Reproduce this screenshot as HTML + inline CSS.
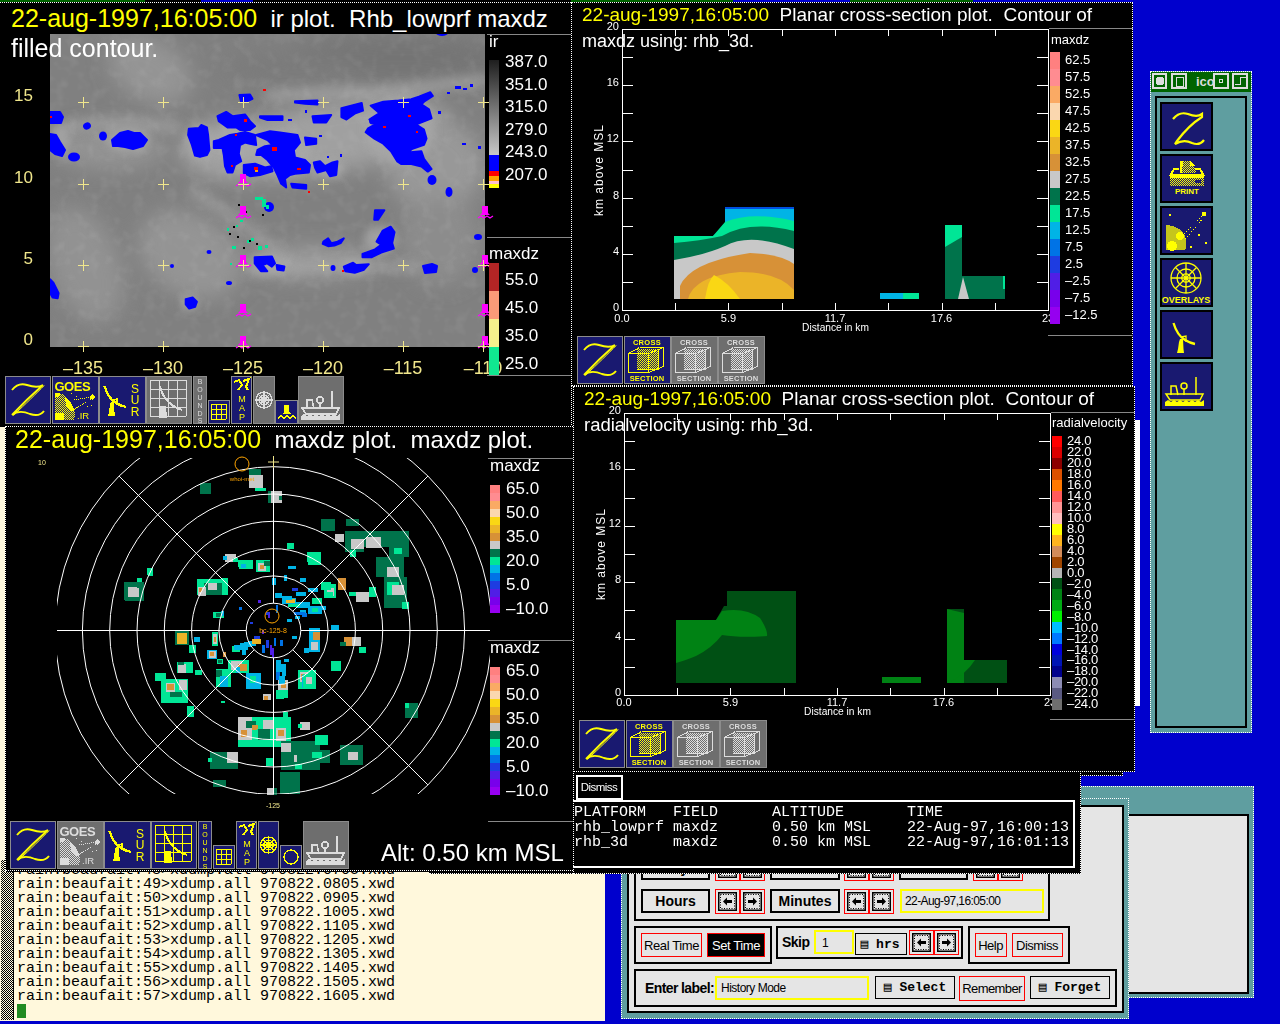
<!DOCTYPE html><html><head><meta charset="utf-8"><style>
html,body{margin:0;padding:0;width:1280px;height:1024px;overflow:hidden;background:#0000cd;position:relative;}
div{box-sizing:border-box;}
.t{position:absolute;white-space:pre;}
svg{position:absolute;overflow:visible;}
</style></head><body>

<div style="position:absolute;left:1150px;top:71px;width:102px;height:662px;background:#5f9ea0;border:1px dotted #fff;"></div>
<div style="position:absolute;left:1151px;top:72px;width:100px;height:20px;background:#006400;"></div>
<svg style="position:absolute;left:1151px;top:72px;" width="100" height="20" viewBox="0 0 100 20" shape-rendering="crispEdges"><rect x="2" y="2" width="13" height="14" fill="none" stroke="#ddd" stroke-width="1.3"/><circle cx="9" cy="9" r="4.5" fill="#ddd"/><rect x="21" y="2" width="14" height="14" fill="none" stroke="#ddd" stroke-width="1.3"/><rect x="25" y="5" width="7" height="9" fill="none" stroke="#ddd"/><text x="45" y="14" font-size="13" font-family="Liberation Sans" font-weight="bold" fill="#ddd">icon</text><rect x="63" y="2" width="14" height="14" fill="#006400" stroke="#ddd" stroke-width="1.3"/><circle cx="70" cy="9" r="2" fill="none" stroke="#ddd"/><rect x="82" y="2" width="14" height="14" fill="none" stroke="#ddd" stroke-width="1.3"/><path d="M84,12 L89,12 L89,5 L95,5" fill="none" stroke="#ddd"/></svg>
<div style="position:absolute;left:1155px;top:96px;width:92px;height:632px;border:2px solid #000;background:#5f9ea0;"></div>
<div style="position:absolute;left:1160px;top:102px;width:53px;height:49px;background:#191970;border:2px solid #000;"></div>
<div style="position:absolute;left:1160px;top:154px;width:53px;height:49px;background:#191970;border:2px solid #000;"></div>
<div style="position:absolute;left:1160px;top:206px;width:53px;height:49px;background:#191970;border:2px solid #000;"></div>
<div style="position:absolute;left:1160px;top:258px;width:53px;height:49px;background:#191970;border:2px solid #000;"></div>
<div style="position:absolute;left:1160px;top:310px;width:53px;height:49px;background:#191970;border:2px solid #000;"></div>
<div style="position:absolute;left:1160px;top:362px;width:53px;height:49px;background:#191970;border:2px solid #000;"></div>
<svg style="position:absolute;left:1160px;top:102px;shape-rendering:auto" width="53" height="49" viewBox="0 0 53 49" shape-rendering="crispEdges"><path d="M13,17 C17,12 21,10 28,12 C33,14 38,15 42,12 L42,15 C34,20 26,27 17,39 L15,42 C20,39 26,38 32,41 C37,43 41,42 44,38" fill="none" stroke="#ff0" stroke-width="2.2"/></svg>
<svg style="position:absolute;left:1160px;top:154px;" width="53" height="49" viewBox="0 0 53 49" shape-rendering="crispEdges"><defs><pattern id="pchk" width="2" height="2" patternUnits="userSpaceOnUse"><rect width="1" height="1" fill="#ff0"/><rect x="1" y="1" width="1" height="1" fill="#ff0"/></pattern></defs><path d="M20,7 L30,7 L34,12 L36,19 L20,19 Z" fill="url(#pchk)"/><path d="M30,7 L35,12 L30,12 Z" fill="#ff0"/><path d="M20,7 L23,7 L22,19 L20,19 Z" fill="#ff0"/><path d="M10,22 L14,15 L19,15 M35,15 L40,15 L44,22" fill="none" stroke="#ff0" stroke-width="2"/><rect x="10" y="20" width="34" height="4" fill="#ff0"/><rect x="10" y="24" width="34" height="8" fill="url(#pchk)"/><rect x="35" y="26" width="6" height="3" fill="#191970"/><text x="27" y="40" font-size="8" font-weight="bold" font-family="Liberation Sans" fill="#ff0" text-anchor="middle">PRINT</text></svg>
<svg style="position:absolute;left:1160px;top:206px;" width="53" height="49" viewBox="0 0 53 49" shape-rendering="crispEdges"><path d="M6,19 Q22,20 26,33 Q27,40 25,44 L6,44 Z" fill="#ff0" opacity="0.75"/><circle cx="12" cy="40" r="5" fill="#ff0"/><circle cx="20" cy="30" r="4" fill="#ff0"/><path d="M22,30 L44,8 M25,33 L45,10" stroke="#ff0" stroke-dasharray="1,2"/><rect x="42" y="6" width="4" height="4" fill="#ff0"/><rect x="9" y="8" width="2" height="2" fill="#ff0"/><rect x="38" y="28" width="2" height="2" fill="#ff0"/><rect x="45" y="36" width="2" height="2" fill="#ff0"/><rect x="30" y="40" width="2" height="2" fill="#ff0"/></svg>
<svg style="position:absolute;left:1160px;top:258px;shape-rendering:auto" width="53" height="49" viewBox="0 0 53 49" shape-rendering="crispEdges"><circle cx="26" cy="20" r="15" fill="none" stroke="#ff0" stroke-width="1.3"/><circle cx="26" cy="20" r="9.0" fill="none" stroke="#ff0" stroke-width="1.3"/><circle cx="26" cy="20" r="4.2" fill="none" stroke="#ff0" stroke-width="1.3"/><path d="M11,20 L41,20 M26,5 L26,35 M15.5,9.5 L36.5,30.5 M15.5,30.5 L36.5,9.5" stroke="#ff0" stroke-width="1.3"/><text x="26" y="45" font-size="9" font-weight="bold" font-family="Liberation Sans" fill="#ff0" text-anchor="middle">OVERLAYS</text></svg>
<svg style="position:absolute;left:1160px;top:310px;shape-rendering:auto" width="53" height="49" viewBox="0 0 53 49" shape-rendering="crispEdges"><g transform="translate(8,3)"><path d="M5.5,10 Q9,22 17,27 Q22,30 27,31" fill="none" stroke="#ff0" stroke-width="2.3"/><path d="M13,24 L18,23 L18,29" fill="none" stroke="#ff0" stroke-width="1.3"/><path d="M12,26 L15,26 L15.5,36 L16,40 L9,40 L10,36 L11,29 Z" fill="#ff0"/></g></svg>
<svg style="position:absolute;left:1160px;top:362px;shape-rendering:auto" width="53" height="49" viewBox="0 0 53 49" shape-rendering="crispEdges"><g transform="translate(2,0)"><g transform="scale(1.0)"><path d="M4,32 L41,32 L38,38 L8,38 Z" fill="none" stroke="#ff0" stroke-width="1.5"/><path d="M9,33 L9,24 L14,24 L16,33" fill="none" stroke="#ff0" stroke-width="1.5"/><circle cx="22" cy="24" r="3" fill="none" stroke="#ff0" stroke-width="1.5"/><path d="M22,27 L22,33 M34,15 L34,33" stroke="#ff0" stroke-width="1.5"/><path d="M3,40 L6,38 L9,40 L12,38 L15,40 L18,38 L21,40 L24,38 L27,40 L30,38 L33,40 L36,38 L39,40 L42,38 L42,44 L3,44 Z" fill="#ff0"/></g></g></svg>
<div style="position:absolute;left:1040px;top:786px;width:214px;height:212px;background:#5f9ea0;border:1px dotted #fff;"></div>
<div style="position:absolute;left:1125px;top:814px;width:124px;height:180px;background:#e5e5e5;border:2px solid #000;"></div>
<div style="position:absolute;left:1045px;top:771px;width:78px;height:5px;background:#000;border-bottom:1px dotted #fff;border-right:1px dotted #fff;"></div>
<div style="position:absolute;left:621px;top:798px;width:508px;height:221px;background:#5f9ea0;border:1px dotted #fff;"></div>
<div style="position:absolute;left:627px;top:805px;width:497px;height:208px;background:#e5e5e5;border:2px solid #000;"></div>
<div style="position:absolute;left:634px;top:812px;width:416px;height:109px;border:2px solid #000;"></div>
<div style="position:absolute;left:641px;top:856px;width:69px;height:24px;background:#e5e5e5;border:2px solid #000;"></div><div class="t" style="left:675.5px;transform:translateX(-50%);top:860.4px;font-size:14px;line-height:16.1px;color:#000;font-family:'Liberation Sans',sans-serif;font-weight:bold;">Day</div>
<div style="position:absolute;left:715px;top:856px;width:25px;height:25px;border:1px solid #f00;background:#e5e5e5;"></div><svg style="position:absolute;left:718px;top:859px;shape-rendering:auto" width="19" height="19" viewBox="0 0 19 19" shape-rendering="crispEdges"><rect x="0" y="0" width="19" height="19" fill="#000"/><rect x="1.5" y="1.5" width="16" height="16" fill="#e5e5e5"/><rect x="2.5" y="2.5" width="14" height="14" fill="none" stroke="#000" stroke-width="1" stroke-dasharray="1,1.5"/><path d="M5,9.5 L9,5.5 L9,8 L14,8 L14,11 L9,11 L9,13.5 Z" fill="#000"/></svg>
<div style="position:absolute;left:740px;top:856px;width:25px;height:25px;border:1px solid #f00;background:#e5e5e5;"></div><svg style="position:absolute;left:743px;top:859px;shape-rendering:auto" width="19" height="19" viewBox="0 0 19 19" shape-rendering="crispEdges"><rect x="0" y="0" width="19" height="19" fill="#000"/><rect x="1.5" y="1.5" width="16" height="16" fill="#e5e5e5"/><rect x="2.5" y="2.5" width="14" height="14" fill="none" stroke="#000" stroke-width="1" stroke-dasharray="1,1.5"/><path d="M14,9.5 L10,5.5 L10,8 L5,8 L5,11 L10,11 L10,13.5 Z" fill="#000"/></svg>
<div style="position:absolute;left:770px;top:856px;width:70px;height:24px;background:#e5e5e5;border:2px solid #000;"></div><div class="t" style="left:805.0px;transform:translateX(-50%);top:860.4px;font-size:14px;line-height:16.1px;color:#000;font-family:'Liberation Sans',sans-serif;font-weight:bold;">Month</div>
<div style="position:absolute;left:844px;top:856px;width:25px;height:25px;border:1px solid #f00;background:#e5e5e5;"></div><svg style="position:absolute;left:847px;top:859px;shape-rendering:auto" width="19" height="19" viewBox="0 0 19 19" shape-rendering="crispEdges"><rect x="0" y="0" width="19" height="19" fill="#000"/><rect x="1.5" y="1.5" width="16" height="16" fill="#e5e5e5"/><rect x="2.5" y="2.5" width="14" height="14" fill="none" stroke="#000" stroke-width="1" stroke-dasharray="1,1.5"/><path d="M5,9.5 L9,5.5 L9,8 L14,8 L14,11 L9,11 L9,13.5 Z" fill="#000"/></svg>
<div style="position:absolute;left:869px;top:856px;width:25px;height:25px;border:1px solid #f00;background:#e5e5e5;"></div><svg style="position:absolute;left:872px;top:859px;shape-rendering:auto" width="19" height="19" viewBox="0 0 19 19" shape-rendering="crispEdges"><rect x="0" y="0" width="19" height="19" fill="#000"/><rect x="1.5" y="1.5" width="16" height="16" fill="#e5e5e5"/><rect x="2.5" y="2.5" width="14" height="14" fill="none" stroke="#000" stroke-width="1" stroke-dasharray="1,1.5"/><path d="M14,9.5 L10,5.5 L10,8 L5,8 L5,11 L10,11 L10,13.5 Z" fill="#000"/></svg>
<div style="position:absolute;left:899px;top:856px;width:69px;height:24px;background:#e5e5e5;border:2px solid #000;"></div><div class="t" style="left:933.5px;transform:translateX(-50%);top:860.4px;font-size:14px;line-height:16.1px;color:#000;font-family:'Liberation Sans',sans-serif;font-weight:bold;">Year</div>
<div style="position:absolute;left:973px;top:856px;width:25px;height:25px;border:1px solid #f00;background:#e5e5e5;"></div><svg style="position:absolute;left:976px;top:859px;shape-rendering:auto" width="19" height="19" viewBox="0 0 19 19" shape-rendering="crispEdges"><rect x="0" y="0" width="19" height="19" fill="#000"/><rect x="1.5" y="1.5" width="16" height="16" fill="#e5e5e5"/><rect x="2.5" y="2.5" width="14" height="14" fill="none" stroke="#000" stroke-width="1" stroke-dasharray="1,1.5"/><path d="M5,9.5 L9,5.5 L9,8 L14,8 L14,11 L9,11 L9,13.5 Z" fill="#000"/></svg>
<div style="position:absolute;left:998px;top:856px;width:25px;height:25px;border:1px solid #f00;background:#e5e5e5;"></div><svg style="position:absolute;left:1001px;top:859px;shape-rendering:auto" width="19" height="19" viewBox="0 0 19 19" shape-rendering="crispEdges"><rect x="0" y="0" width="19" height="19" fill="#000"/><rect x="1.5" y="1.5" width="16" height="16" fill="#e5e5e5"/><rect x="2.5" y="2.5" width="14" height="14" fill="none" stroke="#000" stroke-width="1" stroke-dasharray="1,1.5"/><path d="M14,9.5 L10,5.5 L10,8 L5,8 L5,11 L10,11 L10,13.5 Z" fill="#000"/></svg>
<div style="position:absolute;left:641px;top:889px;width:69px;height:24px;background:#e5e5e5;border:2px solid #000;"></div><div class="t" style="left:675.5px;transform:translateX(-50%);top:893.4px;font-size:14px;line-height:16.1px;color:#000;font-family:'Liberation Sans',sans-serif;font-weight:bold;">Hours</div>
<div style="position:absolute;left:715px;top:889px;width:25px;height:25px;border:1px solid #f00;background:#e5e5e5;"></div><svg style="position:absolute;left:718px;top:892px;shape-rendering:auto" width="19" height="19" viewBox="0 0 19 19" shape-rendering="crispEdges"><rect x="0" y="0" width="19" height="19" fill="#000"/><rect x="1.5" y="1.5" width="16" height="16" fill="#e5e5e5"/><rect x="2.5" y="2.5" width="14" height="14" fill="none" stroke="#000" stroke-width="1" stroke-dasharray="1,1.5"/><path d="M5,9.5 L9,5.5 L9,8 L14,8 L14,11 L9,11 L9,13.5 Z" fill="#000"/></svg>
<div style="position:absolute;left:740px;top:889px;width:25px;height:25px;border:1px solid #f00;background:#e5e5e5;"></div><svg style="position:absolute;left:743px;top:892px;shape-rendering:auto" width="19" height="19" viewBox="0 0 19 19" shape-rendering="crispEdges"><rect x="0" y="0" width="19" height="19" fill="#000"/><rect x="1.5" y="1.5" width="16" height="16" fill="#e5e5e5"/><rect x="2.5" y="2.5" width="14" height="14" fill="none" stroke="#000" stroke-width="1" stroke-dasharray="1,1.5"/><path d="M14,9.5 L10,5.5 L10,8 L5,8 L5,11 L10,11 L10,13.5 Z" fill="#000"/></svg>
<div style="position:absolute;left:770px;top:889px;width:70px;height:24px;background:#e5e5e5;border:2px solid #000;"></div><div class="t" style="left:805.0px;transform:translateX(-50%);top:893.4px;font-size:14px;line-height:16.1px;color:#000;font-family:'Liberation Sans',sans-serif;font-weight:bold;">Minutes</div>
<div style="position:absolute;left:844px;top:889px;width:25px;height:25px;border:1px solid #f00;background:#e5e5e5;"></div><svg style="position:absolute;left:847px;top:892px;shape-rendering:auto" width="19" height="19" viewBox="0 0 19 19" shape-rendering="crispEdges"><rect x="0" y="0" width="19" height="19" fill="#000"/><rect x="1.5" y="1.5" width="16" height="16" fill="#e5e5e5"/><rect x="2.5" y="2.5" width="14" height="14" fill="none" stroke="#000" stroke-width="1" stroke-dasharray="1,1.5"/><path d="M5,9.5 L9,5.5 L9,8 L14,8 L14,11 L9,11 L9,13.5 Z" fill="#000"/></svg>
<div style="position:absolute;left:869px;top:889px;width:25px;height:25px;border:1px solid #f00;background:#e5e5e5;"></div><svg style="position:absolute;left:872px;top:892px;shape-rendering:auto" width="19" height="19" viewBox="0 0 19 19" shape-rendering="crispEdges"><rect x="0" y="0" width="19" height="19" fill="#000"/><rect x="1.5" y="1.5" width="16" height="16" fill="#e5e5e5"/><rect x="2.5" y="2.5" width="14" height="14" fill="none" stroke="#000" stroke-width="1" stroke-dasharray="1,1.5"/><path d="M14,9.5 L10,5.5 L10,8 L5,8 L5,11 L10,11 L10,13.5 Z" fill="#000"/></svg>
<div style="position:absolute;left:900px;top:889px;width:144px;height:24px;border:2px solid #ff0;"></div>
<div class="t" style="left:905px;top:895.1px;font-size:12px;line-height:13.8px;color:#000;font-family:'Liberation Sans',sans-serif;letter-spacing:-0.6px;">22-Aug-97,16:05:00</div>
<div style="position:absolute;left:634px;top:926px;width:138px;height:38px;border:2px solid #000;"></div>
<div style="position:absolute;left:641px;top:933px;width:61px;height:24px;border:1px solid #f00;"></div>
<div class="t" style="left:671.5px;transform:translateX(-50%);top:939.2px;font-size:13px;line-height:14.9px;color:#000;font-family:'Liberation Sans',sans-serif;letter-spacing:-0.4px;">Real Time</div>
<div style="position:absolute;left:707px;top:933px;width:58px;height:24px;border:1px solid #f00;background:#000;"></div>
<div class="t" style="left:736px;transform:translateX(-50%);top:939.2px;font-size:13px;line-height:14.9px;color:#fff;font-family:'Liberation Sans',sans-serif;letter-spacing:-0.4px;">Set Time</div>
<div style="position:absolute;left:776px;top:926px;width:187px;height:33px;border:2px solid #000;"></div>
<div class="t" style="left:782px;top:934.3px;font-size:14px;line-height:16.1px;color:#000;font-family:'Liberation Sans',sans-serif;font-weight:bold;letter-spacing:-0.5px;">Skip</div>
<div style="position:absolute;left:814px;top:930px;width:40px;height:24px;border:2px solid #ff0;"></div>
<div class="t" style="left:822px;top:937.1px;font-size:12px;line-height:13.8px;color:#000;font-family:'Liberation Sans',sans-serif;">1</div>
<div style="position:absolute;left:855px;top:933px;width:52px;height:22px;border:1px solid #000;"></div>
<div class="t" style="left:880px;transform:translateX(-50%);top:938.2px;font-size:13px;line-height:14.9px;color:#000;font-family:'Liberation Mono',monospace;font-weight:bold;">&#9636; hrs</div>
<div style="position:absolute;left:909px;top:930px;width:25px;height:25px;border:1px solid #f00;background:#e5e5e5;"></div><svg style="position:absolute;left:912px;top:933px;shape-rendering:auto" width="19" height="19" viewBox="0 0 19 19" shape-rendering="crispEdges"><rect x="0" y="0" width="19" height="19" fill="#000"/><rect x="1.5" y="1.5" width="16" height="16" fill="#e5e5e5"/><rect x="2.5" y="2.5" width="14" height="14" fill="none" stroke="#000" stroke-width="1" stroke-dasharray="1,1.5"/><path d="M5,9.5 L9,5.5 L9,8 L14,8 L14,11 L9,11 L9,13.5 Z" fill="#000"/></svg>
<div style="position:absolute;left:934px;top:930px;width:25px;height:25px;border:1px solid #f00;background:#e5e5e5;"></div><svg style="position:absolute;left:937px;top:933px;shape-rendering:auto" width="19" height="19" viewBox="0 0 19 19" shape-rendering="crispEdges"><rect x="0" y="0" width="19" height="19" fill="#000"/><rect x="1.5" y="1.5" width="16" height="16" fill="#e5e5e5"/><rect x="2.5" y="2.5" width="14" height="14" fill="none" stroke="#000" stroke-width="1" stroke-dasharray="1,1.5"/><path d="M14,9.5 L10,5.5 L10,8 L5,8 L5,11 L10,11 L10,13.5 Z" fill="#000"/></svg>
<div style="position:absolute;left:968px;top:926px;width:102px;height:38px;border:2px solid #000;"></div>
<div style="position:absolute;left:975px;top:933px;width:32px;height:24px;border:1px solid #f00;"></div>
<div class="t" style="left:990.5px;transform:translateX(-50%);top:939.2px;font-size:13px;line-height:14.9px;color:#000;font-family:'Liberation Sans',sans-serif;letter-spacing:-0.5px;">Help</div>
<div style="position:absolute;left:1012px;top:933px;width:51px;height:24px;border:1px solid #f00;"></div>
<div class="t" style="left:1037px;transform:translateX(-50%);top:939.2px;font-size:13px;line-height:14.9px;color:#000;font-family:'Liberation Sans',sans-serif;letter-spacing:-0.5px;">Dismiss</div>
<div style="position:absolute;left:634px;top:969px;width:483px;height:38px;border:2px solid #000;"></div>
<div class="t" style="left:645px;top:980.3px;font-size:14px;line-height:16.1px;color:#000;font-family:'Liberation Sans',sans-serif;font-weight:bold;letter-spacing:-0.6px;">Enter label:</div>
<div style="position:absolute;left:715px;top:976px;width:154px;height:24px;border:2px solid #ff0;"></div>
<div class="t" style="left:721px;top:982.1px;font-size:12px;line-height:13.8px;color:#000;font-family:'Liberation Sans',sans-serif;letter-spacing:-0.5px;">History Mode</div>
<div style="position:absolute;left:875px;top:976px;width:80px;height:23px;border:1px solid #000;"></div>
<div class="t" style="left:915px;transform:translateX(-50%);top:981.2px;font-size:13px;line-height:14.9px;color:#000;font-family:'Liberation Mono',monospace;font-weight:bold;">&#9636; Select</div>
<div style="position:absolute;left:959px;top:976px;width:66px;height:25px;border:1px solid #f00;"></div>
<div class="t" style="left:992px;transform:translateX(-50%);top:982.2px;font-size:13px;line-height:14.9px;color:#000;font-family:'Liberation Sans',sans-serif;letter-spacing:-0.6px;">Remember</div>
<div style="position:absolute;left:1030px;top:976px;width:80px;height:23px;border:1px solid #000;"></div>
<div class="t" style="left:1070px;transform:translateX(-50%);top:981.2px;font-size:13px;line-height:14.9px;color:#000;font-family:'Liberation Mono',monospace;font-weight:bold;">&#9636; Forget</div>
<div style="position:absolute;left:0px;top:420px;width:605px;height:601px;background:#fff8dc;"></div>
<div style="position:absolute;left:1px;top:860px;width:12px;height:160px;background:repeating-conic-gradient(#000 0 25%, #fff8dc 0 50%) 0 0/2px 2px;"></div>
<div style="position:absolute;left:13px;top:860px;width:1px;height:160px;background:#000;"></div>
<div class="t" style="left:17px;top:861.5px;font-size:15px;line-height:17.2px;color:#000;font-family:'Liberation Mono',monospace;">rain:beaufait:48>xdump.all 970822.0705.xwd</div>
<div class="t" style="left:17px;top:875.5px;font-size:15px;line-height:17.2px;color:#000;font-family:'Liberation Mono',monospace;">rain:beaufait:49>xdump.all 970822.0805.xwd</div>
<div class="t" style="left:17px;top:889.5px;font-size:15px;line-height:17.2px;color:#000;font-family:'Liberation Mono',monospace;">rain:beaufait:50>xdump.all 970822.0905.xwd</div>
<div class="t" style="left:17px;top:903.5px;font-size:15px;line-height:17.2px;color:#000;font-family:'Liberation Mono',monospace;">rain:beaufait:51>xdump.all 970822.1005.xwd</div>
<div class="t" style="left:17px;top:917.5px;font-size:15px;line-height:17.2px;color:#000;font-family:'Liberation Mono',monospace;">rain:beaufait:52>xdump.all 970822.1105.xwd</div>
<div class="t" style="left:17px;top:931.5px;font-size:15px;line-height:17.2px;color:#000;font-family:'Liberation Mono',monospace;">rain:beaufait:53>xdump.all 970822.1205.xwd</div>
<div class="t" style="left:17px;top:945.5px;font-size:15px;line-height:17.2px;color:#000;font-family:'Liberation Mono',monospace;">rain:beaufait:54>xdump.all 970822.1305.xwd</div>
<div class="t" style="left:17px;top:959.5px;font-size:15px;line-height:17.2px;color:#000;font-family:'Liberation Mono',monospace;">rain:beaufait:55>xdump.all 970822.1405.xwd</div>
<div class="t" style="left:17px;top:973.5px;font-size:15px;line-height:17.2px;color:#000;font-family:'Liberation Mono',monospace;">rain:beaufait:56>xdump.all 970822.1505.xwd</div>
<div class="t" style="left:17px;top:987.5px;font-size:15px;line-height:17.2px;color:#000;font-family:'Liberation Mono',monospace;">rain:beaufait:57>xdump.all 970822.1605.xwd</div>
<div style="position:absolute;left:17px;top:1004px;width:9px;height:14px;background:#228b22;"></div>
<div style="position:absolute;left:0px;top:0px;width:573px;height:427px;background:#000;"></div>
<div style="position:absolute;left:0px;top:0px;width:145px;height:2px;background:#006400;"></div>
<div style="position:absolute;left:201px;top:0px;width:52px;height:2px;background:#0000cd;"></div>
<div style="position:absolute;left:0px;top:2px;width:571px;height:1px;border-top:1px dotted #fff;"></div>
<div style="position:absolute;left:571px;top:2px;width:1px;height:425px;border-left:1px dotted #fff;"></div>
<svg style="position:absolute;left:0px;top:0px;shape-rendering:auto" width="573" height="427" viewBox="0 0 573 427" shape-rendering="crispEdges"><defs><clipPath id="satc"><rect x="50" y="34" width="435" height="313"/></clipPath><filter id="bl1" x="-50%" y="-50%" width="200%" height="200%"><feGaussianBlur stdDeviation="10"/></filter><filter id="bl3" x="-50%" y="-50%" width="200%" height="200%"><feGaussianBlur stdDeviation="6"/></filter><filter id="bl2" x="-50%" y="-50%" width="200%" height="200%"><feGaussianBlur stdDeviation="4"/></filter><filter id="tex" x="0" y="0" width="100%" height="100%"><feTurbulence type="fractalNoise" baseFrequency="0.09" numOctaves="2" seed="3"/><feColorMatrix type="matrix" values="0 0 0 0 1  0 0 0 0 1  0 0 0 0 1  1.2 0 0 0 -0.55"/></filter></defs><g clip-path="url(#satc)"><rect x="50" y="34" width="435" height="313" fill="#808080"/><g filter="url(#bl1)"><ellipse cx="400" cy="58" rx="110" ry="22" fill="#747474"/><ellipse cx="290" cy="68" rx="70" ry="14" fill="#7a7a7a"/><ellipse cx="150" cy="70" rx="45" ry="30" fill="#949494" transform="rotate(30 150 70)"/><ellipse cx="330" cy="138" rx="120" ry="35" fill="#a0a0a0" transform="rotate(-10 330 138)"/><ellipse cx="235" cy="150" rx="55" ry="30" fill="#a2a2a2"/><ellipse cx="435" cy="165" rx="50" ry="45" fill="#989898"/><ellipse cx="110" cy="148" rx="55" ry="22" fill="#939393"/><ellipse cx="85" cy="265" rx="35" ry="60" fill="#929292" transform="rotate(-20 85 265)"/><ellipse cx="190" cy="255" rx="55" ry="40" fill="#949494" transform="rotate(30 190 255)"/><ellipse cx="310" cy="262" rx="65" ry="16" fill="#9a9a9a"/><ellipse cx="440" cy="240" rx="40" ry="45" fill="#8c8c8c"/></g><g filter="url(#bl3)" opacity="0.8"><path d="M265,96 Q330,92 380,92 Q430,86 485,80" stroke="#b0b0b0" stroke-width="8" fill="none"/><path d="M60,128 Q120,118 180,128" stroke="#a4a4a4" stroke-width="10" fill="none"/><path d="M190,190 Q260,230 300,275" stroke="#a0a0a0" stroke-width="10" fill="none"/><path d="M250,272 Q330,262 420,268" stroke="#a8a8a8" stroke-width="8" fill="none"/></g><rect x="50" y="34" width="435" height="313" filter="url(#tex)" opacity="0.14"/><g filter="url(#bl2)" fill="#a8a8a8" opacity="0.8"><ellipse cx="200" cy="142" rx="14" ry="18"/><ellipse cx="238" cy="140" rx="22" ry="22"/><ellipse cx="283" cy="155" rx="28" ry="22"/><ellipse cx="400" cy="130" rx="35" ry="35"/><ellipse cx="128" cy="140" rx="22" ry="12"/><ellipse cx="60" cy="140" rx="10" ry="16"/><ellipse cx="330" cy="168" rx="14" ry="10"/><ellipse cx="380" cy="240" rx="16" ry="14"/><ellipse cx="268" cy="264" rx="18" ry="10"/><ellipse cx="355" cy="267" rx="14" ry="8"/><ellipse cx="190" cy="303" rx="8" ry="8"/></g><polygon points="50.0,112.0 60.0,112.0 63.0,117.0 61.0,123.0 50.0,123.0" fill="#0000ff" stroke="#0000ff" stroke-width="2" stroke-linejoin="round"/><polygon points="50.0,134.0 56.0,135.0 60.0,142.0 65.0,150.0 62.0,156.0 55.0,154.0 50.0,150.0" fill="#0000ff" stroke="#0000ff" stroke-width="2" stroke-linejoin="round"/><ellipse cx="74" cy="157" rx="6" ry="4.5" fill="#0000ff"/><ellipse cx="87" cy="126" rx="4" ry="3.5" fill="#0000ff" transform="rotate(-30 87 126)"/><ellipse cx="103" cy="136" rx="4" ry="4.5" fill="#0000ff"/><polygon points="112.0,140.0 120.0,133.0 128.0,131.0 134.0,133.0 140.0,133.0 147.0,140.0 143.0,146.0 133.0,149.0 125.0,147.0 118.0,146.0 113.0,146.0" fill="#0000ff" stroke="#0000ff" stroke-width="2" stroke-linejoin="round"/><polygon points="188.8,128.8 198.8,128.1 201.2,125.0 206.9,127.5 208.1,135.0 209.4,150.0 206.9,155.0 200.0,156.9 195.0,155.6 191.9,145.0 188.1,135.0" fill="#0000ff" stroke="#0000ff" stroke-width="2" stroke-linejoin="round"/><polygon points="217.5,116.2 226.2,111.9 232.5,116.2 245.0,114.4 250.0,121.2 255.0,126.2 250.0,130.0 240.0,130.0 236.2,127.5 227.5,127.5 218.8,121.2" fill="#0000ff" stroke="#0000ff" stroke-width="2" stroke-linejoin="round"/><polygon points="239.4,95.0 250.0,94.4 252.5,98.8 247.5,101.2 241.2,101.9" fill="#0000ff" stroke="#0000ff" stroke-width="2" stroke-linejoin="round"/><polygon points="213.8,141.2 218.8,140.0 230.0,135.0 237.5,133.8 245.0,131.9 255.0,135.0 256.2,145.0 250.0,143.8 245.0,142.5 240.0,145.0 238.8,153.8 241.2,161.2 235.0,165.0 232.5,172.5 227.5,172.5 225.0,166.2 223.8,155.0 222.5,148.1 213.8,148.1" fill="#0000ff" stroke="#0000ff" stroke-width="2" stroke-linejoin="round"/><polygon points="243.8,165.0 255.0,163.8 265.0,167.5 271.2,166.2 272.5,171.2 260.0,175.0 250.0,176.2 243.8,173.1" fill="#0000ff" stroke="#0000ff" stroke-width="2" stroke-linejoin="round"/><polygon points="256.2,135.0 270.0,131.2 280.0,132.5 297.5,135.0 300.0,142.5 293.8,150.0 295.0,157.5 305.0,160.0 310.0,165.0 308.8,172.5 295.0,173.8 290.0,175.0 285.0,178.8 286.2,187.5 281.2,183.8 277.5,175.0 273.8,167.5 267.5,160.0 261.2,155.0 256.2,155.0 257.5,150.0 265.0,146.2 272.5,145.0 267.5,140.0" fill="#0000ff" stroke="#0000ff" stroke-width="2" stroke-linejoin="round"/><polygon points="260.0,116.2 282.5,116.2 282.5,120.0 267.5,120.0 260.0,117.5" fill="#0000ff" stroke="#0000ff" stroke-width="2" stroke-linejoin="round"/><polygon points="295.0,101.2 317.5,100.6 317.5,104.4 305.0,103.8 295.0,102.5" fill="#0000ff" stroke="#0000ff" stroke-width="2" stroke-linejoin="round"/><polygon points="312.5,116.2 331.2,115.0 326.2,122.5 313.8,122.5" fill="#0000ff" stroke="#0000ff" stroke-width="2" stroke-linejoin="round"/><polygon points="313.8,162.5 320.0,161.2 325.0,166.2 332.5,162.5 337.5,161.2 336.2,175.0 330.0,176.2 326.2,170.0 317.5,172.5 315.0,167.5" fill="#0000ff" stroke="#0000ff" stroke-width="2" stroke-linejoin="round"/><polygon points="291.2,183.8 306.2,185.0 306.2,188.8 292.5,187.5" fill="#0000ff" stroke="#0000ff" stroke-width="2" stroke-linejoin="round"/><polygon points="305.0,137.5 316.2,138.8 316.2,143.8 306.2,145.0" fill="#0000ff" stroke="#0000ff" stroke-width="2" stroke-linejoin="round"/><polygon points="370.6,105.6 383.3,101.7 398.6,100.5 411.3,99.2 418.9,96.7 430.3,92.2 432.9,96.0 424.0,101.7 421.4,104.3 429.0,109.4 431.6,118.3 418.9,123.3 416.3,124.6 424.0,129.7 426.5,138.6 424.0,144.9 412.5,148.7 407.5,152.5 421.4,151.3 424.0,158.9 431.6,169.0 427.8,171.6 421.4,166.5 411.3,164.0 401.1,164.0 397.3,161.4 391.0,151.3 383.3,143.7 374.4,138.6 365.6,132.2 368.1,128.4 377.0,123.3 369.4,119.5 373.2,117.0 379.5,113.2" fill="#0000ff" stroke="#0000ff" stroke-width="2" stroke-linejoin="round"/><polygon points="341.4,108.1 361.7,103.0 363.0,110.6 355.4,113.2 346.5,119.5 341.4,117.0" fill="#0000ff" stroke="#0000ff" stroke-width="2" stroke-linejoin="round"/><ellipse cx="373" cy="121" rx="4" ry="3.5" fill="#0000ff"/><ellipse cx="432" cy="180" rx="4.5" ry="5" fill="#0000ff"/><ellipse cx="449" cy="192" rx="3.5" ry="5" fill="#0000ff"/><ellipse cx="442" cy="33" rx="6" ry="3" fill="#0000ff"/><rect x="455" y="86" width="6" height="3" fill="#0000ff"/><rect x="463" y="88" width="4" height="2" fill="#0000ff"/><rect x="470" y="84" width="3" height="3" fill="#0000ff"/><rect x="447" y="92" width="3" height="2" fill="#0000ff"/><rect x="438" y="111" width="3" height="3" fill="#0000ff"/><rect x="462" y="143" width="4" height="2" fill="#0000ff"/><rect x="478" y="146" width="3" height="3" fill="#0000ff"/><rect x="395" y="138" width="2" height="2" fill="#0000ff"/><rect x="340" y="154" width="2" height="3" fill="#0000ff"/><rect x="327" y="156" width="2" height="2" fill="#0000ff"/><rect x="288" y="119" width="4" height="2" fill="#0000ff"/><rect x="305" y="110" width="2" height="3" fill="#0000ff"/><rect x="319" y="135" width="3" height="2" fill="#0000ff"/><polygon points="254.7,257.2 271.9,256.4 275.0,263.4 271.9,266.6 267.2,263.4 262.5,265.0 267.2,271.2 260.9,271.2 254.7,263.4" fill="#0000ff" stroke="#0000ff" stroke-width="2" stroke-linejoin="round"/><polygon points="276.6,265.0 284.4,266.6 283.6,270.5 277.3,269.7" fill="#0000ff" stroke="#0000ff" stroke-width="2" stroke-linejoin="round"/><polygon points="343.8,266.6 353.1,262.7 356.2,265.0 368.8,264.2 364.0,269.7 354.7,272.8 345.3,271.2" fill="#0000ff" stroke="#0000ff" stroke-width="2" stroke-linejoin="round"/><ellipse cx="333" cy="268" rx="2.5" ry="3" fill="#0000ff"/><polygon points="362.5,254.0 375.0,249.4 381.2,244.7 376.6,241.6 382.8,230.6 390.6,226.7 394.5,232.2 392.2,243.1 393.8,248.6 381.2,252.5 371.9,257.2 362.5,257.2" fill="#0000ff" stroke="#0000ff" stroke-width="2" stroke-linejoin="round"/><polygon points="323.4,241.6 328.1,238.4 331.2,243.1 337.5,241.6 343.8,238.4 340.6,243.1 334.4,245.5 328.1,246.2 322.7,243.9" fill="#0000ff" stroke="#0000ff" stroke-width="2" stroke-linejoin="round"/><polygon points="375.0,210.3 384.4,210.3 378.1,219.7 374.2,219.7" fill="#0000ff" stroke="#0000ff" stroke-width="2" stroke-linejoin="round"/><ellipse cx="269" cy="207" rx="5" ry="5" fill="#0000ff"/><ellipse cx="229" cy="283" rx="3" ry="2" fill="#0000ff"/><ellipse cx="209" cy="252" rx="2.5" ry="2" fill="#0000ff"/><ellipse cx="172" cy="266" rx="2" ry="2" fill="#0000ff"/><polygon points="50.0,279.3 53.4,282.8 58.6,293.1 57.7,298.2 52.6,297.4 50.0,293.1" fill="#0000ff" stroke="#0000ff" stroke-width="2" stroke-linejoin="round"/><polygon points="185.7,299.1 192.6,297.4 196.9,301.7 195.2,306.8 189.2,308.6 185.7,304.3" fill="#0000ff" stroke="#0000ff" stroke-width="2" stroke-linejoin="round"/><polygon points="423.0,266.0 432.0,264.0 437.0,266.0 436.0,272.0 425.0,273.0" fill="#0000ff" stroke="#0000ff" stroke-width="2" stroke-linejoin="round"/><ellipse cx="478" cy="237" rx="4" ry="3" fill="#0000ff"/><ellipse cx="475" cy="270" rx="3" ry="3" fill="#0000ff"/><rect x="244" y="119" width="3" height="3" fill="#ff0000"/><rect x="272" y="147" width="5" height="4" fill="#ff0000"/><rect x="254" y="167" width="4" height="3" fill="#ff0000"/><rect x="297" y="168" width="4" height="2" fill="#ff0000"/><rect x="231" y="165" width="2" height="2" fill="#ff0000"/><rect x="235" y="134" width="2" height="2" fill="#ff0000"/><rect x="383" y="126" width="3" height="2" fill="#ff0000"/><rect x="408" y="115" width="3" height="2" fill="#ff0000"/><rect x="416" y="131" width="2" height="2" fill="#ff0000"/><rect x="263" y="89" width="3" height="2" fill="#ff0000"/><rect x="50" y="116" width="2" height="2" fill="#ff0000"/><rect x="308" y="191" width="2" height="2" fill="#ff0000"/><rect x="342" y="270" width="2" height="2" fill="#ff0000"/><rect x="255" y="170" width="3" height="2" fill="#ffa500"/><rect x="255" y="197" width="8" height="3" fill="#00e696"/><rect x="262" y="199" width="4" height="8" fill="#00e696"/><rect x="266" y="205" width="3" height="4" fill="#00e696"/><rect x="243" y="210" width="2" height="2" fill="#00e696"/><rect x="240" y="220" width="3" height="2" fill="#00e696"/><rect x="227" y="228" width="2" height="3" fill="#00e696"/><rect x="236" y="225" width="2" height="2" fill="#00e696"/><rect x="247" y="240" width="3" height="3" fill="#00e696"/><rect x="232" y="246" width="4" height="3" fill="#00e696"/><rect x="258" y="246" width="4" height="4" fill="#00e696"/><rect x="251" y="238" width="3" height="3" fill="#00e696"/><rect x="265" y="245" width="3" height="3" fill="#00e696"/><rect x="230" y="263" width="2" height="2" fill="#00e696"/><rect x="238" y="204" width="2" height="2" fill="#000"/><rect x="245" y="211" width="2" height="2" fill="#000"/><rect x="229" y="233" width="2" height="2" fill="#000"/><rect x="237" y="236" width="2" height="2" fill="#000"/><rect x="243" y="247" width="2" height="2" fill="#000"/><rect x="249" y="240" width="2" height="2" fill="#000"/><rect x="256" y="243" width="2" height="2" fill="#000"/><rect x="233" y="226" width="2" height="2" fill="#000"/><rect x="262" y="214" width="2" height="2" fill="#000"/></g><path d="M240,174 L246,174 L246,181 L248,183 L238,183 L240,181 Z" fill="#ff00ff"/><path d="M236,186 L239,184 L242,186 L245,184 L248,186 L251,184" fill="none" stroke="#ff00ff" stroke-width="1.3"/><path d="M240,206 L246,206 L246,213 L248,215 L238,215 L240,213 Z" fill="#ff00ff"/><path d="M236,218 L239,216 L242,218 L245,216 L248,218 L251,216" fill="none" stroke="#ff00ff" stroke-width="1.3"/><path d="M240,255 L246,255 L246,262 L248,264 L238,264 L240,262 Z" fill="#ff00ff"/><path d="M236,267 L239,265 L242,267 L245,265 L248,267 L251,265" fill="none" stroke="#ff00ff" stroke-width="1.3"/><path d="M240,304 L246,304 L246,311 L248,313 L238,313 L240,311 Z" fill="#ff00ff"/><path d="M236,316 L239,314 L242,316 L245,314 L248,316 L251,314" fill="none" stroke="#ff00ff" stroke-width="1.3"/><path d="M240,336 L246,336 L246,343 L248,345 L238,345 L240,343 Z" fill="#ff00ff"/><path d="M236,348 L239,346 L242,348 L245,346 L248,348 L251,346" fill="none" stroke="#ff00ff" stroke-width="1.3"/><path d="M482,206 L488,206 L488,213 L490,215 L480,215 L482,213 Z" fill="#ff00ff"/><path d="M478,218 L481,216 L484,218 L487,216 L490,218 L493,216" fill="none" stroke="#ff00ff" stroke-width="1.3"/><path d="M482,255 L488,255 L488,262 L490,264 L480,264 L482,262 Z" fill="#ff00ff"/><path d="M478,267 L481,265 L484,267 L487,265 L490,267 L493,265" fill="none" stroke="#ff00ff" stroke-width="1.3"/><path d="M482,304 L488,304 L488,311 L490,313 L480,313 L482,311 Z" fill="#ff00ff"/><path d="M478,316 L481,314 L484,316 L487,314 L490,316 L493,314" fill="none" stroke="#ff00ff" stroke-width="1.3"/><path d="M482,336 L488,336 L488,343 L490,345 L480,345 L482,343 Z" fill="#ff00ff"/><path d="M478,348 L481,346 L484,348 L487,346 L490,348 L493,346" fill="none" stroke="#ff00ff" stroke-width="1.3"/></svg>
<div class="t" style="left:11px;top:4.4px;font-size:25px;line-height:28.7px;color:#fff;font-family:'Liberation Sans',sans-serif;"><span style="color:#ff0">22-aug-1997,16:05:00</span><span style="font-size:24px">  ir plot.  Rhb_lowprf maxdz</span></div>
<div class="t" style="left:11px;top:34.4px;font-size:25px;line-height:28.7px;color:#fff;font-family:'Liberation Sans',sans-serif;">filled contour.</div>
<svg style="position:absolute;left:0px;top:0px;" width="573" height="427" viewBox="0 0 573 427" shape-rendering="crispEdges"><path d="M78,102.5 L89,102.5 M83.5,97 L83.5,108" stroke="#f0e68c" stroke-width="1"/><path d="M78,184.5 L89,184.5 M83.5,179 L83.5,190" stroke="#f0e68c" stroke-width="1"/><path d="M78,265.5 L89,265.5 M83.5,260 L83.5,271" stroke="#f0e68c" stroke-width="1"/><path d="M78,346.5 L89,346.5 M83.5,341 L83.5,352" stroke="#f0e68c" stroke-width="1"/><path d="M158,102.5 L169,102.5 M163.5,97 L163.5,108" stroke="#f0e68c" stroke-width="1"/><path d="M158,184.5 L169,184.5 M163.5,179 L163.5,190" stroke="#f0e68c" stroke-width="1"/><path d="M158,265.5 L169,265.5 M163.5,260 L163.5,271" stroke="#f0e68c" stroke-width="1"/><path d="M158,346.5 L169,346.5 M163.5,341 L163.5,352" stroke="#f0e68c" stroke-width="1"/><path d="M238,102.5 L249,102.5 M243.5,97 L243.5,108" stroke="#f0e68c" stroke-width="1"/><path d="M238,184.5 L249,184.5 M243.5,179 L243.5,190" stroke="#f0e68c" stroke-width="1"/><path d="M238,265.5 L249,265.5 M243.5,260 L243.5,271" stroke="#f0e68c" stroke-width="1"/><path d="M238,346.5 L249,346.5 M243.5,341 L243.5,352" stroke="#f0e68c" stroke-width="1"/><path d="M318,102.5 L329,102.5 M323.5,97 L323.5,108" stroke="#f0e68c" stroke-width="1"/><path d="M318,184.5 L329,184.5 M323.5,179 L323.5,190" stroke="#f0e68c" stroke-width="1"/><path d="M318,265.5 L329,265.5 M323.5,260 L323.5,271" stroke="#f0e68c" stroke-width="1"/><path d="M318,346.5 L329,346.5 M323.5,341 L323.5,352" stroke="#f0e68c" stroke-width="1"/><path d="M398,102.5 L409,102.5 M403.5,97 L403.5,108" stroke="#f0e68c" stroke-width="1"/><path d="M398,184.5 L409,184.5 M403.5,179 L403.5,190" stroke="#f0e68c" stroke-width="1"/><path d="M398,265.5 L409,265.5 M403.5,260 L403.5,271" stroke="#f0e68c" stroke-width="1"/><path d="M398,346.5 L409,346.5 M403.5,341 L403.5,352" stroke="#f0e68c" stroke-width="1"/><path d="M478,102.5 L489,102.5 M483.5,97 L483.5,108" stroke="#f0e68c" stroke-width="1"/><path d="M478,184.5 L489,184.5 M483.5,179 L483.5,190" stroke="#f0e68c" stroke-width="1"/><path d="M478,265.5 L489,265.5 M483.5,260 L483.5,271" stroke="#f0e68c" stroke-width="1"/><path d="M478,346.5 L489,346.5 M483.5,341 L483.5,352" stroke="#f0e68c" stroke-width="1"/></svg>
<div class="t" style="right:1247px;top:85.6px;font-size:17px;line-height:19.5px;color:#f0e68c;font-family:'Liberation Sans',sans-serif;">15</div>
<div class="t" style="right:1247px;top:167.6px;font-size:17px;line-height:19.5px;color:#f0e68c;font-family:'Liberation Sans',sans-serif;">10</div>
<div class="t" style="right:1247px;top:248.6px;font-size:17px;line-height:19.5px;color:#f0e68c;font-family:'Liberation Sans',sans-serif;">5</div>
<div class="t" style="right:1247px;top:329.6px;font-size:17px;line-height:19.5px;color:#f0e68c;font-family:'Liberation Sans',sans-serif;">0</div>
<div class="t" style="left:83px;transform:translateX(-50%);top:357.7px;font-size:18px;line-height:20.7px;color:#f0e68c;font-family:'Liberation Sans',sans-serif;">&#8211;135</div>
<div class="t" style="left:163px;transform:translateX(-50%);top:357.7px;font-size:18px;line-height:20.7px;color:#f0e68c;font-family:'Liberation Sans',sans-serif;">&#8211;130</div>
<div class="t" style="left:243px;transform:translateX(-50%);top:357.7px;font-size:18px;line-height:20.7px;color:#f0e68c;font-family:'Liberation Sans',sans-serif;">&#8211;125</div>
<div class="t" style="left:323px;transform:translateX(-50%);top:357.7px;font-size:18px;line-height:20.7px;color:#f0e68c;font-family:'Liberation Sans',sans-serif;">&#8211;120</div>
<div class="t" style="left:403px;transform:translateX(-50%);top:357.7px;font-size:18px;line-height:20.7px;color:#f0e68c;font-family:'Liberation Sans',sans-serif;">&#8211;115</div>
<div class="t" style="left:483px;transform:translateX(-50%);top:357.7px;font-size:18px;line-height:20.7px;color:#f0e68c;font-family:'Liberation Sans',sans-serif;">&#8211;110</div>
<div style="position:absolute;left:487px;top:34px;width:84px;height:1px;background:#888;"></div>
<div class="t" style="left:489px;top:31.6px;font-size:17px;line-height:19.5px;color:#fff;font-family:'Liberation Sans',sans-serif;">ir</div>
<div style="position:absolute;left:489px;top:60px;width:10px;height:95px;background:linear-gradient(#1e1e1e, #c8c8c8);"></div>
<div style="position:absolute;left:489px;top:155px;width:10px;height:16px;background:#00f;"></div>
<div style="position:absolute;left:489px;top:171px;width:10px;height:5px;background:#f00;"></div>
<div style="position:absolute;left:489px;top:176px;width:10px;height:5px;background:#ffa500;"></div>
<div style="position:absolute;left:489px;top:181px;width:10px;height:3px;background:#ffc0cb;"></div>
<div style="position:absolute;left:489px;top:184px;width:10px;height:4px;background:#ff0;"></div>
<div class="t" style="left:505px;top:52.1px;font-size:17px;line-height:19.5px;color:#fff;font-family:'Liberation Sans',sans-serif;">387.0</div>
<div class="t" style="left:505px;top:74.6px;font-size:17px;line-height:19.5px;color:#fff;font-family:'Liberation Sans',sans-serif;">351.0</div>
<div class="t" style="left:505px;top:97.1px;font-size:17px;line-height:19.5px;color:#fff;font-family:'Liberation Sans',sans-serif;">315.0</div>
<div class="t" style="left:505px;top:119.6px;font-size:17px;line-height:19.5px;color:#fff;font-family:'Liberation Sans',sans-serif;">279.0</div>
<div class="t" style="left:505px;top:142.1px;font-size:17px;line-height:19.5px;color:#fff;font-family:'Liberation Sans',sans-serif;">243.0</div>
<div class="t" style="left:505px;top:164.6px;font-size:17px;line-height:19.5px;color:#fff;font-family:'Liberation Sans',sans-serif;">207.0</div>
<div style="position:absolute;left:487px;top:237px;width:84px;height:1px;background:#888;"></div>
<div class="t" style="left:489px;top:243.6px;font-size:17px;line-height:19.5px;color:#fff;font-family:'Liberation Sans',sans-serif;">maxdz</div>
<div style="position:absolute;left:489px;top:263px;width:10px;height:28px;background:#b22525;"></div>
<div style="position:absolute;left:489px;top:291px;width:10px;height:28px;background:#fa9a78;"></div>
<div style="position:absolute;left:489px;top:319px;width:10px;height:28px;background:#f5f08c;"></div>
<div style="position:absolute;left:489px;top:347px;width:10px;height:28px;background:#10e890;"></div>
<div class="t" style="left:505px;top:269.6px;font-size:17px;line-height:19.5px;color:#fff;font-family:'Liberation Sans',sans-serif;">55.0</div>
<div class="t" style="left:505px;top:297.6px;font-size:17px;line-height:19.5px;color:#fff;font-family:'Liberation Sans',sans-serif;">45.0</div>
<div class="t" style="left:505px;top:325.6px;font-size:17px;line-height:19.5px;color:#fff;font-family:'Liberation Sans',sans-serif;">35.0</div>
<div class="t" style="left:505px;top:353.6px;font-size:17px;line-height:19.5px;color:#fff;font-family:'Liberation Sans',sans-serif;">25.0</div>
<div style="position:absolute;left:487px;top:375px;width:84px;height:1px;background:#888;"></div>
<div style="position:absolute;left:5px;top:376px;width:46px;height:48px;background:#191970;border:1px solid #8c8c8c;"></div><svg style="position:absolute;left:5px;top:376px;shape-rendering:auto" width="46" height="48" viewBox="0 0 46 48" shape-rendering="crispEdges"><path d="M7,14 C11,9 16,7 22,9 C28,11 33,12 38,9 C30,16 19,26 7,39 C12,35 18,35 25,38 C31,40 36,39 39,35" fill="none" stroke="#ffff00" stroke-width="1.9" transform="scale(1.000,1.000)"/><path d="M38,9 C30,17 20,27 7,39" fill="none" stroke="#ffff00" stroke-width="1" transform="translate(1.2,0.5) scale(1.000,1.000)"/></svg>
<div style="position:absolute;left:52px;top:376px;width:47px;height:48px;background:#191970;border:1px solid #8c8c8c;"></div><svg style="position:absolute;left:52px;top:376px;" width="47" height="48" viewBox="0 0 47 48" shape-rendering="crispEdges"><defs><pattern id="gchkff0" width="2" height="2" patternUnits="userSpaceOnUse"><rect width="1" height="1" fill="#ff0"/><rect x="1" y="1" width="1" height="1" fill="#ff0"/></pattern></defs><text x="2.5" y="14.5" font-size="13" font-family="Liberation Sans" font-weight="bold" fill="#ff0" letter-spacing="-0.5" transform="scale(1,1)">GOES</text><path d="M3,17 L8,17 Q22,24 23,40 L22,44 L3,44 Z" fill="url(#gchkff0)"/><path d="M3,17 L8,17 L7,21 L3,21 Z" fill="#ff0"/><path d="M13,22 L18,26 L23,34 L20,35 L14,30 Z" fill="#ff0"/><path d="M3,37 L12,37 L12,44 L3,44 Z" fill="#ff0"/><path d="M22,24 L40,21 M23,33 L40,22" stroke="#ff0" stroke-dasharray="1,1" stroke-width="1"/><path d="M40,18 L43,21 L40,24 L37,21 Z" fill="#ff0"/><rect x="19" y="17" width="1" height="1" fill="#ff0"/><rect x="24" y="20" width="1" height="1" fill="#ff0"/><rect x="35" y="30" width="1" height="1" fill="#ff0"/><rect x="39" y="29" width="1" height="1" fill="#ff0"/><text x="25" y="43" font-size="9.5" font-family="Liberation Sans" fill="#ff0">.IR</text></svg>
<div style="position:absolute;left:99px;top:376px;width:47px;height:48px;background:#191970;border:1px solid #8c8c8c;"></div><svg style="position:absolute;left:99px;top:376px;" width="47" height="48" viewBox="0 0 47 48" shape-rendering="crispEdges"><path d="M5.5,10 Q9,22 17,27 Q22,30 27,31" fill="none" stroke="#ff0" stroke-width="2.3"/><path d="M13,24 L18,23 L18,29" fill="none" stroke="#ff0" stroke-width="1.3"/><path d="M12,26 L15,26 L15.5,36 L16,40 L9,40 L10,36 L11,29 Z" fill="#ff0"/><text x="36" y="17" font-size="12" font-family="Liberation Sans" fill="#ff0" text-anchor="middle" transform="scale(1,1)">S</text><text x="36" y="28" font-size="12" font-family="Liberation Sans" fill="#ff0" text-anchor="middle">U</text><text x="36" y="40" font-size="12" font-family="Liberation Sans" fill="#ff0" text-anchor="middle">R</text></svg>
<div style="position:absolute;left:146px;top:376px;width:46px;height:48px;background:#6e6e6e;border:1px solid #8c8c8c;"></div><svg style="position:absolute;left:146px;top:376px;" width="46" height="48" viewBox="0 0 46 48" shape-rendering="crispEdges"><path d="M4,4 L4,40 M4,4 L40,4" stroke="#ddd" stroke-width="1"/><path d="M13,4 L13,40 M4,13 L40,13" stroke="#ddd" stroke-width="1"/><path d="M22,4 L22,40 M4,22 L40,22" stroke="#ddd" stroke-width="1"/><path d="M31,4 L31,40 M4,31 L40,31" stroke="#ddd" stroke-width="1"/><path d="M40,4 L40,40 M4,40 L40,40" stroke="#ddd" stroke-width="1"/><path d="M14,10 Q18,28 36,34" fill="none" stroke="#ddd" stroke-width="2"/><path d="M14,30 L20,30 L21,42 L13,42 Z" fill="#ddd"/></svg>
<div style="position:absolute;left:193px;top:376px;width:14px;height:48px;background:#6e6e6e;border:1px solid #8c8c8c;"></div><svg style="position:absolute;left:193px;top:376px;" width="14" height="48" viewBox="0 0 14 48" shape-rendering="crispEdges"><text x="7" y="8" font-size="7" font-family="Liberation Sans" fill="#ddd" text-anchor="middle" transform="" >B</text><text x="7" y="16" font-size="7" font-family="Liberation Sans" fill="#ddd" text-anchor="middle">O</text><text x="7" y="24" font-size="7" font-family="Liberation Sans" fill="#ddd" text-anchor="middle">U</text><text x="7" y="32" font-size="7" font-family="Liberation Sans" fill="#ddd" text-anchor="middle">N</text><text x="7" y="40" font-size="7" font-family="Liberation Sans" fill="#ddd" text-anchor="middle">D</text><text x="7" y="47" font-size="7" font-family="Liberation Sans" fill="#ddd" text-anchor="middle">S</text></svg>
<div style="position:absolute;left:208px;top:400px;width:22px;height:24px;background:#191970;border:1px solid #8c8c8c;"></div><svg style="position:absolute;left:208px;top:400px;" width="22" height="24" viewBox="0 0 22 24" shape-rendering="crispEdges"><path d="M3,4 L3,19 M3,4 L18,4" stroke="#ff0" stroke-width="1"/><path d="M8,4 L8,19 M3,9 L18,9" stroke="#ff0" stroke-width="1"/><path d="M13,4 L13,19 M3,14 L18,14" stroke="#ff0" stroke-width="1"/><path d="M18,4 L18,19 M3,19 L18,19" stroke="#ff0" stroke-width="1"/></svg>
<div style="position:absolute;left:231px;top:376px;width:21px;height:48px;background:#191970;border:1px solid #8c8c8c;"></div><svg style="position:absolute;left:231px;top:376px;" width="21" height="48" viewBox="0 0 21 48" shape-rendering="crispEdges"><path d="M3,6 L8,4 L11,9 L7,14 M12,5 L18,3 L15,11 L17,14" fill="none" stroke="#ff0" stroke-width="2"/><text x="11" y="26" font-size="9" font-family="Liberation Sans" fill="#ff0" text-anchor="middle">M</text><text x="11" y="35" font-size="9" font-family="Liberation Sans" fill="#ff0" text-anchor="middle">A</text><text x="11" y="44" font-size="9" font-family="Liberation Sans" fill="#ff0" text-anchor="middle">P</text></svg>
<div style="position:absolute;left:253px;top:376px;width:22px;height:48px;background:#6e6e6e;border:1px solid #8c8c8c;"></div><svg style="position:absolute;left:253px;top:376px;" width="22" height="48" viewBox="0 0 22 48" shape-rendering="crispEdges"><circle cx="11" cy="24" r="8" fill="none" stroke="#ddd" stroke-width="1.3"/><circle cx="11" cy="24" r="4.8" fill="none" stroke="#ddd" stroke-width="1.3"/><circle cx="11" cy="24" r="2.2" fill="none" stroke="#ddd" stroke-width="1.3"/><path d="M3,24 L19,24 M11,16 L11,32 M5.4,18.4 L16.6,29.6 M5.4,29.6 L16.6,18.4" stroke="#ddd" stroke-width="1.3"/></svg>
<div style="position:absolute;left:275px;top:400px;width:23px;height:24px;background:#191970;border:1px solid #8c8c8c;"></div><svg style="position:absolute;left:275px;top:400px;" width="23" height="24" viewBox="0 0 23 24" shape-rendering="crispEdges"><path d="M9,5 L14,5 L14,12 L16,14 L7,14 L9,12 Z" fill="#ff0"/><path d="M3,18 L6,16 L9,18 L12,16 L15,18 L18,16 L21,18" fill="none" stroke="#ff0" stroke-width="1.5"/></svg>
<div style="position:absolute;left:298px;top:376px;width:46px;height:48px;background:#6e6e6e;border:1px solid #8c8c8c;"></div><svg style="position:absolute;left:298px;top:376px;" width="46" height="48" viewBox="0 0 46 48" shape-rendering="crispEdges"><g transform="scale(1.0)"><path d="M4,32 L41,32 L38,38 L8,38 Z" fill="none" stroke="#ddd" stroke-width="1.5"/><path d="M9,33 L9,24 L14,24 L16,33" fill="none" stroke="#ddd" stroke-width="1.5"/><circle cx="22" cy="24" r="3" fill="none" stroke="#ddd" stroke-width="1.5"/><path d="M22,27 L22,33 M34,15 L34,33" stroke="#ddd" stroke-width="1.5"/><path d="M3,40 L6,38 L9,40 L12,38 L15,40 L18,38 L21,40 L24,38 L27,40 L30,38 L33,40 L36,38 L39,40 L42,38 L42,44 L3,44 Z" fill="#ddd"/></g></svg>
<div style="position:absolute;left:429px;top:866px;width:150px;height:8px;background:#000;border-bottom:1px dotted #fff;"></div>
<div style="position:absolute;left:5px;top:426px;width:568px;height:446px;background:#000;"></div>
<div style="position:absolute;left:5px;top:426px;width:568px;height:1px;border-top:1px dotted #fff;"></div>
<div style="position:absolute;left:5px;top:426px;width:1px;height:446px;border-left:1px dotted #fff;"></div>
<div style="position:absolute;left:5px;top:870px;width:568px;height:1px;border-top:1px dotted #fff;"></div>
<div class="t" style="left:15px;top:425.4px;font-size:25px;line-height:28.7px;color:#fff;font-family:'Liberation Sans',sans-serif;"><span style="color:#ff0">22-aug-1997,16:05:00</span><span style="font-size:24px">  maxdz plot.  maxdz plot.</span></div>
<svg style="position:absolute;left:0px;top:0px;shape-rendering:auto" width="1280" height="1024" viewBox="0 0 1280 1024" shape-rendering="crispEdges"><rect x="200" y="483" width="11" height="11" fill="#00734b"/><rect x="249" y="469" width="12" height="7" fill="#00734b"/><rect x="249" y="475" width="14" height="13" fill="#c8c8c8"/><rect x="255" y="488" width="11" height="3" fill="#00e696"/><rect x="268" y="491" width="14" height="12" fill="#c8c8c8"/><rect x="268" y="491" width="3" height="12" fill="#00734b"/><rect x="279" y="496" width="3" height="4" fill="#00734b"/><rect x="287" y="543" width="7" height="6" fill="#00e696"/><rect x="226" y="554" width="7" height="8" fill="#c8c8c8"/><rect x="238" y="560" width="14" height="7" fill="#00e696"/><rect x="241" y="563" width="6" height="4" fill="#00b4e6"/><rect x="256" y="561" width="13" height="11" fill="#00e696"/><rect x="259" y="563" width="7" height="7" fill="#c8c8c8"/><rect x="261" y="565" width="3" height="3" fill="#d79137"/><rect x="307" y="552" width="13" height="10" fill="#00e696"/><rect x="124" y="582" width="18" height="18" fill="#00734b"/><rect x="127" y="585" width="12" height="12" fill="#c8c8c8"/><rect x="137" y="578" width="5" height="8" fill="#00e696"/><rect x="147" y="568" width="5" height="7" fill="#00e696"/><rect x="197" y="579" width="31" height="16" fill="#00e696"/><rect x="204" y="583" width="18" height="12" fill="#00734b"/><rect x="208" y="583" width="9" height="7" fill="#c8c8c8"/><rect x="222" y="578" width="6" height="10" fill="#00e696"/><rect x="198" y="587" width="8" height="9" fill="#c8c8c8"/><rect x="199" y="588" width="3" height="4" fill="#d79137"/><rect x="213" y="612" width="11" height="6" fill="#00e696"/><rect x="216" y="613" width="5" height="4" fill="#00734b"/><rect x="221" y="611" width="3" height="5" fill="#00b4e6"/><rect x="239" y="607" width="3" height="3" fill="#0073e6"/><rect x="175" y="631" width="14" height="14" fill="#00734b"/><rect x="177" y="633" width="10" height="11" fill="#ebb428"/><rect x="194" y="637" width="6" height="5" fill="#00b4e6"/><rect x="189" y="645" width="7" height="8" fill="#00e696"/><rect x="212" y="632" width="6" height="14" fill="#00e696"/><rect x="213" y="634" width="4" height="10" fill="#c8c8c8"/><rect x="214" y="637" width="2" height="5" fill="#d79137"/><rect x="207" y="650" width="10" height="9" fill="#00b4e6"/><rect x="209" y="651" width="7" height="7" fill="#c8c8c8"/><rect x="210" y="652" width="4" height="4" fill="#d79137"/><rect x="223" y="652" width="3" height="5" fill="#d79137"/><rect x="217" y="659" width="6" height="5" fill="#00e696"/><rect x="218" y="660" width="4" height="3" fill="#00734b"/><rect x="177" y="662" width="16" height="11" fill="#00e696"/><rect x="178" y="664" width="8" height="9" fill="#c8c8c8"/><rect x="178" y="662" width="6" height="3" fill="#00734b"/><rect x="155" y="673" width="11" height="8" fill="#00e696"/><rect x="161" y="679" width="27" height="24" fill="#00e696"/><rect x="166" y="683" width="9" height="9" fill="#c8c8c8"/><rect x="167" y="684" width="7" height="6" fill="#d79137"/><rect x="179" y="680" width="8" height="10" fill="#c8c8c8"/><rect x="170" y="692" width="12" height="5" fill="#00734b"/><rect x="162" y="692" width="6" height="8" fill="#00e696"/><rect x="195" y="670" width="7" height="5" fill="#00e696"/><rect x="187" y="706" width="7" height="11" fill="#00e696"/><rect x="216" y="669" width="15" height="18" fill="#00e696"/><rect x="216" y="670" width="6" height="7" fill="#00734b"/><rect x="220" y="676" width="8" height="11" fill="#00b4e6"/><rect x="228" y="660" width="21" height="13" fill="#00e696"/><rect x="231" y="661" width="11" height="9" fill="#c8c8c8"/><rect x="238" y="664" width="9" height="7" fill="#d79137"/><rect x="236" y="667" width="4" height="6" fill="#00b4e6"/><rect x="232" y="646" width="8" height="6" fill="#00e696"/><rect x="240" y="643" width="8" height="7" fill="#00b4e6"/><rect x="248" y="641" width="8" height="5" fill="#00b4e6"/><rect x="255" y="639" width="6" height="5" fill="#ebb428"/><rect x="242" y="648" width="4" height="7" fill="#00b4e6"/><rect x="246" y="673" width="15" height="16" fill="#00b4e6"/><rect x="250" y="676" width="6" height="7" fill="#00e696"/><rect x="255" y="682" width="5" height="6" fill="#00b4e6"/><rect x="263" y="694" width="8" height="6" fill="#c8c8c8"/><rect x="264" y="696" width="4" height="4" fill="#d79137"/><rect x="221" y="701" width="4" height="2" fill="#00e696"/><rect x="276" y="660" width="5" height="8" fill="#00b4e6"/><rect x="282" y="664" width="4" height="12" fill="#00b4e6"/><rect x="276" y="672" width="4" height="8" fill="#0073e6"/><rect x="278" y="680" width="10" height="10" fill="#c8c8c8"/><rect x="281" y="682" width="5" height="6" fill="#d79137"/><rect x="276" y="690" width="8" height="9" fill="#00e696"/><rect x="284" y="659" width="5" height="3" fill="#00b4e6"/><rect x="298" y="670" width="18" height="19" fill="#00e696"/><rect x="300" y="672" width="8" height="10" fill="#c8c8c8"/><rect x="301" y="674" width="4" height="6" fill="#d79137"/><rect x="308" y="676" width="8" height="12" fill="#00734b"/><rect x="309" y="628" width="11" height="24" fill="#00b4e6"/><rect x="313" y="632" width="7" height="8" fill="#d79137"/><rect x="311" y="642" width="7" height="8" fill="#c8c8c8"/><rect x="225" y="554" width="11" height="8" fill="#c8c8c8"/><rect x="223" y="556" width="4" height="4" fill="#00b4e6"/><rect x="233" y="558" width="5" height="4" fill="#00e696"/><rect x="239" y="560" width="14" height="9" fill="#00e696"/><rect x="241" y="564" width="5" height="4" fill="#00b4e6"/><rect x="256" y="560" width="14" height="12" fill="#00e696"/><rect x="258" y="563" width="8" height="8" fill="#c8c8c8"/><rect x="260" y="565" width="4" height="4" fill="#d79137"/><rect x="264" y="561" width="6" height="5" fill="#00734b"/><rect x="272" y="578" width="4" height="7" fill="#00b4e6"/><rect x="125" y="582" width="19" height="19" fill="#00734b"/><rect x="128" y="587" width="11" height="10" fill="#c8c8c8"/><rect x="137" y="582" width="7" height="6" fill="#00734b"/><rect x="148" y="568" width="5" height="8" fill="#00e696"/><rect x="284" y="575" width="3" height="6" fill="#00b4e6"/><rect x="288" y="566" width="8" height="3" fill="#00b4e6"/><rect x="292" y="588" width="6" height="3" fill="#1e3ce1"/><rect x="300" y="578" width="6" height="4" fill="#00b4e6"/><rect x="258" y="600" width="3" height="3" fill="#501ee6"/><rect x="268" y="612" width="2" height="6" fill="#501ee6"/><rect x="276" y="605" width="2" height="8" fill="#0073e6"/><rect x="254" y="636" width="6" height="3" fill="#1e3ce1"/><rect x="262" y="645" width="3" height="8" fill="#0073e6"/><rect x="272" y="648" width="2" height="10" fill="#501ee6"/><rect x="280" y="640" width="3" height="6" fill="#0073e6"/><rect x="292" y="636" width="5" height="3" fill="#00b4e6"/><rect x="304" y="648" width="5" height="5" fill="#00b4e6"/><rect x="266" y="612" width="3" height="3" fill="#1e3ce1"/><rect x="250" y="622" width="3" height="2" fill="#1e3ce1"/><rect x="262" y="630" width="2" height="4" fill="#501ee6"/><rect x="289" y="600" width="6" height="2" fill="#00b4e6"/><rect x="300" y="610" width="6" height="3" fill="#00b4e6"/><rect x="275" y="593" width="7" height="5" fill="#00b4e6"/><rect x="282" y="598" width="14" height="6" fill="#00b4e6"/><rect x="286" y="599" width="9" height="4" fill="#ebb428"/><rect x="296" y="602" width="14" height="6" fill="#00b4e6"/><rect x="308" y="606" width="14" height="8" fill="#00b4e6"/><rect x="312" y="608" width="6" height="4" fill="#00e696"/><rect x="287" y="619" width="5" height="3" fill="#00b4e6"/><rect x="295" y="616" width="5" height="3" fill="#00b4e6"/><rect x="302" y="613" width="5" height="4" fill="#0073e6"/><rect x="234" y="645" width="14" height="5" fill="#00b4e6"/><rect x="244" y="642" width="8" height="5" fill="#00b4e6"/><rect x="252" y="639" width="8" height="5" fill="#ebb428"/><rect x="266" y="640" width="3" height="8" fill="#1e3ce1"/><rect x="270" y="645" width="2" height="10" fill="#501ee6"/><rect x="274" y="638" width="2" height="8" fill="#0073e6"/><rect x="276" y="664" width="6" height="8" fill="#00b4e6"/><rect x="279" y="676" width="6" height="8" fill="#00b4e6"/><rect x="282" y="690" width="6" height="8" fill="#00e696"/><rect x="302" y="675" width="11" height="13" fill="#00b4e6"/><rect x="306" y="679" width="5" height="5" fill="#00e696"/><rect x="331" y="625" width="8" height="6" fill="#00b4e6"/><rect x="332" y="661" width="7" height="7" fill="#00e696"/><rect x="312" y="560" width="8" height="5" fill="#00e696"/><rect x="324" y="584" width="12" height="14" fill="#00e696"/><rect x="327" y="588" width="7" height="8" fill="#c8c8c8"/><rect x="321" y="519" width="14" height="12" fill="#00734b"/><rect x="346" y="519" width="13" height="7" fill="#00734b"/><rect x="335" y="534" width="9" height="8" fill="#c8c8c8"/><rect x="345" y="531" width="19" height="21" fill="#00734b"/><rect x="351" y="539" width="13" height="10" fill="#c8c8c8"/><rect x="350" y="550" width="6" height="7" fill="#00e696"/><rect x="364" y="531" width="25" height="16" fill="#00734b"/><rect x="366" y="537" width="15" height="11" fill="#c8c8c8"/><rect x="389" y="531" width="20" height="26" fill="#00734b"/><rect x="394" y="548" width="8" height="6" fill="#00e696"/><rect x="376" y="557" width="28" height="20" fill="#00734b"/><rect x="387" y="567" width="12" height="10" fill="#c8c8c8"/><rect x="384" y="577" width="23" height="31" fill="#00734b"/><rect x="387" y="582" width="12" height="13" fill="#00e696"/><rect x="392" y="585" width="12" height="10" fill="#c8c8c8"/><rect x="402" y="602" width="7" height="7" fill="#00e696"/><rect x="356" y="592" width="13" height="10" fill="#c8c8c8"/><rect x="369" y="587" width="7" height="10" fill="#00e696"/><rect x="321" y="582" width="10" height="8" fill="#00e696"/><rect x="326" y="592" width="7" height="5" fill="#00e696"/><rect x="349" y="592" width="7" height="4" fill="#00e696"/><rect x="338" y="578" width="8" height="12" fill="#d79137"/><rect x="308" y="552" width="13" height="13" fill="#00e696"/><rect x="282" y="596" width="10" height="4" fill="#00b4e6"/><rect x="296" y="592" width="10" height="4" fill="#00b4e6"/><rect x="308" y="588" width="10" height="4" fill="#00b4e6"/><rect x="288" y="604" width="12" height="3" fill="#00e696"/><rect x="312" y="598" width="10" height="6" fill="#00e696"/><rect x="294" y="612" width="11" height="3" fill="#0073e6"/><rect x="318" y="606" width="8" height="4" fill="#00b4e6"/><rect x="344" y="637" width="17" height="9" fill="#d79137"/><rect x="352" y="637" width="9" height="9" fill="#c8c8c8"/><rect x="340" y="642" width="6" height="4" fill="#00734b"/><rect x="359" y="647" width="7" height="6" fill="#00e696"/><rect x="331" y="661" width="10" height="10" fill="#00e696"/><rect x="303" y="674" width="13" height="15" fill="#00e696"/><rect x="306" y="677" width="6" height="7" fill="#c8c8c8"/><rect x="238" y="717" width="53" height="30" fill="#00e696"/><rect x="238" y="717" width="14" height="23" fill="#c8c8c8"/><rect x="241" y="730" width="6" height="7" fill="#d79137"/><rect x="246" y="721" width="10" height="7" fill="#00734b"/><rect x="252" y="725" width="6" height="5" fill="#d79137"/><rect x="263" y="720" width="11" height="9" fill="#c8c8c8"/><rect x="257" y="729" width="5" height="11" fill="#00e696"/><rect x="276" y="728" width="10" height="13" fill="#c8c8c8"/><rect x="278" y="730" width="6" height="6" fill="#d79137"/><rect x="256" y="740" width="14" height="7" fill="#00e696"/><rect x="258" y="729" width="12" height="11" fill="#00734b"/><rect x="300" y="722" width="10" height="8" fill="#c8c8c8"/><rect x="298" y="724" width="4" height="4" fill="#00e696"/><rect x="210" y="752" width="28" height="17" fill="#00734b"/><rect x="227" y="752" width="11" height="11" fill="#c8c8c8"/><rect x="208" y="758" width="4" height="4" fill="#00e696"/><rect x="266" y="758" width="8" height="8" fill="#00e696"/><rect x="281" y="741" width="39" height="29" fill="#00734b"/><rect x="281" y="743" width="10" height="9" fill="#c8c8c8"/><rect x="294" y="755" width="3" height="7" fill="#c8c8c8"/><rect x="295" y="764" width="7" height="5" fill="#00e696"/><rect x="310" y="760" width="10" height="10" fill="#00734b"/><rect x="302" y="741" width="8" height="9" fill="#00734b"/><rect x="280" y="772" width="20" height="22" fill="#00734b"/><rect x="280" y="772" width="10" height="8" fill="#00734b"/><rect x="213" y="780" width="13" height="7" fill="#00734b"/><rect x="267" y="788" width="10" height="7" fill="#c8c8c8"/><rect x="274" y="788" width="3" height="7" fill="#00734b"/><rect x="283" y="712" width="5" height="5" fill="#00e696"/><rect x="310" y="750" width="20" height="13" fill="#00734b"/><rect x="312" y="752" width="10" height="6" fill="#00e696"/><rect x="340" y="745" width="23" height="20" fill="#00734b"/><rect x="348" y="752" width="10" height="8" fill="#c8c8c8"/><rect x="315" y="735" width="13" height="10" fill="#00e696"/><rect x="405" y="703" width="13" height="15" fill="#00734b"/><rect x="405" y="703" width="4" height="5" fill="#00e696"/><defs><clipPath id="rc"><rect x="57" y="458" width="433" height="336"/></clipPath></defs><g clip-path="url(#rc)" stroke="#fff" stroke-width="1" fill="none"><circle cx="273.5" cy="630.5" r="27.3"/><circle cx="273.5" cy="630.5" r="54.6"/><circle cx="273.5" cy="630.5" r="81.9"/><circle cx="273.5" cy="630.5" r="109.2"/><circle cx="273.5" cy="630.5" r="136.5"/><circle cx="273.5" cy="630.5" r="163.8"/><circle cx="273.5" cy="630.5" r="191.1"/><circle cx="273.5" cy="630.5" r="218.4"/><path d="M300.8,630.5 L491.9,630.5"/><path d="M292.8,649.8 L427.9,784.9"/><path d="M273.5,657.8 L273.5,848.9"/><path d="M254.2,649.8 L119.1,784.9"/><path d="M246.2,630.5 L55.1,630.5"/><path d="M254.2,611.2 L119.1,476.1"/><path d="M273.5,603.2 L273.5,412.1"/><path d="M292.8,611.2 L427.9,476.1"/></g><text x="273" y="633" font-size="7" font-family="Liberation Sans" fill="#ffa500" text-anchor="middle">bc-125-8</text><text x="242" y="481" font-size="6" font-family="Liberation Sans" fill="#ffa500" text-anchor="middle">whoi-met</text><path d="M268,462 L279,462 M273.5,456 L273.5,468" stroke="#f0e68c"/><circle cx="272" cy="616" r="7" fill="none" stroke="#ffa500"/><circle cx="242" cy="464" r="7" fill="none" stroke="#ffa500"/></svg>
<div style="position:absolute;left:488px;top:458px;width:85px;height:1px;background:#888;"></div><div class="t" style="left:490px;top:455.6px;font-size:17px;line-height:19.5px;color:#fff;font-family:'Liberation Sans',sans-serif;">maxdz</div><div style="position:absolute;left:490px;top:485px;width:10px;height:8px;background:#ff8080;"></div><div style="position:absolute;left:490px;top:493px;width:10px;height:8px;background:#ff8c91;"></div><div style="position:absolute;left:490px;top:501px;width:10px;height:8px;background:#faaa64;"></div><div style="position:absolute;left:490px;top:509px;width:10px;height:8px;background:#fad7af;"></div><div style="position:absolute;left:490px;top:517px;width:10px;height:8px;background:#fad714;"></div><div style="position:absolute;left:490px;top:525px;width:10px;height:8px;background:#ebb428;"></div><div style="position:absolute;left:490px;top:533px;width:10px;height:8px;background:#d79137;"></div><div style="position:absolute;left:490px;top:541px;width:10px;height:8px;background:#c8c8c8;"></div><div style="position:absolute;left:490px;top:549px;width:10px;height:8px;background:#00734b;"></div><div style="position:absolute;left:490px;top:557px;width:10px;height:8px;background:#00e696;"></div><div style="position:absolute;left:490px;top:565px;width:10px;height:8px;background:#00b4e6;"></div><div style="position:absolute;left:490px;top:573px;width:10px;height:8px;background:#0073e6;"></div><div style="position:absolute;left:490px;top:581px;width:10px;height:8px;background:#1e3ce1;"></div><div style="position:absolute;left:490px;top:589px;width:10px;height:8px;background:#501ee6;"></div><div style="position:absolute;left:490px;top:597px;width:10px;height:8px;background:#7800eb;"></div><div style="position:absolute;left:490px;top:605px;width:10px;height:8px;background:#9600f0;"></div><div class="t" style="left:506px;top:478.6px;font-size:17px;line-height:19.5px;color:#fff;font-family:'Liberation Sans',sans-serif;">65.0</div><div class="t" style="left:506px;top:502.6px;font-size:17px;line-height:19.5px;color:#fff;font-family:'Liberation Sans',sans-serif;">50.0</div><div class="t" style="left:506px;top:526.6px;font-size:17px;line-height:19.5px;color:#fff;font-family:'Liberation Sans',sans-serif;">35.0</div><div class="t" style="left:506px;top:550.6px;font-size:17px;line-height:19.5px;color:#fff;font-family:'Liberation Sans',sans-serif;">20.0</div><div class="t" style="left:506px;top:574.6px;font-size:17px;line-height:19.5px;color:#fff;font-family:'Liberation Sans',sans-serif;">5.0</div><div class="t" style="left:506px;top:598.6px;font-size:17px;line-height:19.5px;color:#fff;font-family:'Liberation Sans',sans-serif;">&#8211;10.0</div>
<div style="position:absolute;left:488px;top:640px;width:85px;height:1px;background:#888;"></div><div class="t" style="left:490px;top:637.6px;font-size:17px;line-height:19.5px;color:#fff;font-family:'Liberation Sans',sans-serif;">maxdz</div><div style="position:absolute;left:490px;top:667px;width:10px;height:8px;background:#ff8080;"></div><div style="position:absolute;left:490px;top:675px;width:10px;height:8px;background:#ff8c91;"></div><div style="position:absolute;left:490px;top:683px;width:10px;height:8px;background:#faaa64;"></div><div style="position:absolute;left:490px;top:691px;width:10px;height:8px;background:#fad7af;"></div><div style="position:absolute;left:490px;top:699px;width:10px;height:8px;background:#fad714;"></div><div style="position:absolute;left:490px;top:707px;width:10px;height:8px;background:#ebb428;"></div><div style="position:absolute;left:490px;top:715px;width:10px;height:8px;background:#d79137;"></div><div style="position:absolute;left:490px;top:723px;width:10px;height:8px;background:#c8c8c8;"></div><div style="position:absolute;left:490px;top:731px;width:10px;height:8px;background:#00734b;"></div><div style="position:absolute;left:490px;top:739px;width:10px;height:8px;background:#00e696;"></div><div style="position:absolute;left:490px;top:747px;width:10px;height:8px;background:#00b4e6;"></div><div style="position:absolute;left:490px;top:755px;width:10px;height:8px;background:#0073e6;"></div><div style="position:absolute;left:490px;top:763px;width:10px;height:8px;background:#1e3ce1;"></div><div style="position:absolute;left:490px;top:771px;width:10px;height:8px;background:#501ee6;"></div><div style="position:absolute;left:490px;top:779px;width:10px;height:8px;background:#7800eb;"></div><div style="position:absolute;left:490px;top:787px;width:10px;height:8px;background:#9600f0;"></div><div class="t" style="left:506px;top:660.6px;font-size:17px;line-height:19.5px;color:#fff;font-family:'Liberation Sans',sans-serif;">65.0</div><div class="t" style="left:506px;top:684.6px;font-size:17px;line-height:19.5px;color:#fff;font-family:'Liberation Sans',sans-serif;">50.0</div><div class="t" style="left:506px;top:708.6px;font-size:17px;line-height:19.5px;color:#fff;font-family:'Liberation Sans',sans-serif;">35.0</div><div class="t" style="left:506px;top:732.6px;font-size:17px;line-height:19.5px;color:#fff;font-family:'Liberation Sans',sans-serif;">20.0</div><div class="t" style="left:506px;top:756.6px;font-size:17px;line-height:19.5px;color:#fff;font-family:'Liberation Sans',sans-serif;">5.0</div><div class="t" style="left:506px;top:780.6px;font-size:17px;line-height:19.5px;color:#fff;font-family:'Liberation Sans',sans-serif;">&#8211;10.0</div>
<div style="position:absolute;left:488px;top:821px;width:85px;height:1px;background:#888;"></div>
<div class="t" style="left:273px;transform:translateX(-50%);top:801.7px;font-size:7px;line-height:8.0px;color:#f0e68c;font-family:'Liberation Sans',sans-serif;">-125</div>
<div class="t" style="left:42px;transform:translateX(-50%);top:458.7px;font-size:7px;line-height:8.0px;color:#f0e68c;font-family:'Liberation Sans',sans-serif;">10</div>
<div class="t" style="left:381px;top:839.3px;font-size:24px;line-height:27.6px;color:#fff;font-family:'Liberation Sans',sans-serif;">Alt: 0.50 km MSL</div>
<div style="position:absolute;left:10px;top:821px;width:46px;height:48px;background:#191970;border:1px solid #8c8c8c;"></div><svg style="position:absolute;left:10px;top:821px;shape-rendering:auto" width="46" height="48" viewBox="0 0 46 48" shape-rendering="crispEdges"><path d="M7,14 C11,9 16,7 22,9 C28,11 33,12 38,9 C30,16 19,26 7,39 C12,35 18,35 25,38 C31,40 36,39 39,35" fill="none" stroke="#ffff00" stroke-width="1.9" transform="scale(1.000,1.000)"/><path d="M38,9 C30,17 20,27 7,39" fill="none" stroke="#ffff00" stroke-width="1" transform="translate(1.2,0.5) scale(1.000,1.000)"/></svg>
<div style="position:absolute;left:57px;top:821px;width:47px;height:48px;background:#6e6e6e;border:1px solid #8c8c8c;"></div><svg style="position:absolute;left:57px;top:821px;" width="47" height="48" viewBox="0 0 47 48" shape-rendering="crispEdges"><defs><pattern id="gchkddd" width="2" height="2" patternUnits="userSpaceOnUse"><rect width="1" height="1" fill="#ddd"/><rect x="1" y="1" width="1" height="1" fill="#ddd"/></pattern></defs><text x="2.5" y="14.5" font-size="13" font-family="Liberation Sans" font-weight="bold" fill="#ddd" letter-spacing="-0.5" transform="scale(1,1)">GOES</text><path d="M3,17 L8,17 Q22,24 23,40 L22,44 L3,44 Z" fill="url(#gchkddd)"/><path d="M3,17 L8,17 L7,21 L3,21 Z" fill="#ddd"/><path d="M13,22 L18,26 L23,34 L20,35 L14,30 Z" fill="#ddd"/><path d="M3,37 L12,37 L12,44 L3,44 Z" fill="#ddd"/><path d="M22,24 L40,21 M23,33 L40,22" stroke="#ddd" stroke-dasharray="1,1" stroke-width="1"/><path d="M40,18 L43,21 L40,24 L37,21 Z" fill="#ddd"/><rect x="19" y="17" width="1" height="1" fill="#ddd"/><rect x="24" y="20" width="1" height="1" fill="#ddd"/><rect x="35" y="30" width="1" height="1" fill="#ddd"/><rect x="39" y="29" width="1" height="1" fill="#ddd"/><text x="25" y="43" font-size="9.5" font-family="Liberation Sans" fill="#ddd">.IR</text></svg>
<div style="position:absolute;left:104px;top:821px;width:47px;height:48px;background:#191970;border:1px solid #8c8c8c;"></div><svg style="position:absolute;left:104px;top:821px;" width="47" height="48" viewBox="0 0 47 48" shape-rendering="crispEdges"><path d="M5.5,10 Q9,22 17,27 Q22,30 27,31" fill="none" stroke="#ff0" stroke-width="2.3"/><path d="M13,24 L18,23 L18,29" fill="none" stroke="#ff0" stroke-width="1.3"/><path d="M12,26 L15,26 L15.5,36 L16,40 L9,40 L10,36 L11,29 Z" fill="#ff0"/><text x="36" y="17" font-size="12" font-family="Liberation Sans" fill="#ff0" text-anchor="middle" transform="scale(1,1)">S</text><text x="36" y="28" font-size="12" font-family="Liberation Sans" fill="#ff0" text-anchor="middle">U</text><text x="36" y="40" font-size="12" font-family="Liberation Sans" fill="#ff0" text-anchor="middle">R</text></svg>
<div style="position:absolute;left:151px;top:821px;width:46px;height:48px;background:#191970;border:1px solid #8c8c8c;"></div><svg style="position:absolute;left:151px;top:821px;" width="46" height="48" viewBox="0 0 46 48" shape-rendering="crispEdges"><path d="M4,4 L4,40 M4,4 L40,4" stroke="#ff0" stroke-width="1"/><path d="M13,4 L13,40 M4,13 L40,13" stroke="#ff0" stroke-width="1"/><path d="M22,4 L22,40 M4,22 L40,22" stroke="#ff0" stroke-width="1"/><path d="M31,4 L31,40 M4,31 L40,31" stroke="#ff0" stroke-width="1"/><path d="M40,4 L40,40 M4,40 L40,40" stroke="#ff0" stroke-width="1"/><path d="M14,10 Q18,28 36,34" fill="none" stroke="#ff0" stroke-width="2"/><path d="M14,30 L20,30 L21,42 L13,42 Z" fill="#ff0"/></svg>
<div style="position:absolute;left:198px;top:821px;width:14px;height:48px;background:#191970;border:1px solid #8c8c8c;"></div><svg style="position:absolute;left:198px;top:821px;" width="14" height="48" viewBox="0 0 14 48" shape-rendering="crispEdges"><text x="7" y="8" font-size="7" font-family="Liberation Sans" fill="#ff0" text-anchor="middle">B</text><text x="7" y="16" font-size="7" font-family="Liberation Sans" fill="#ff0" text-anchor="middle">O</text><text x="7" y="24" font-size="7" font-family="Liberation Sans" fill="#ff0" text-anchor="middle">U</text><text x="7" y="32" font-size="7" font-family="Liberation Sans" fill="#ff0" text-anchor="middle">N</text><text x="7" y="40" font-size="7" font-family="Liberation Sans" fill="#ff0" text-anchor="middle">D</text><text x="7" y="48" font-size="7" font-family="Liberation Sans" fill="#ff0" text-anchor="middle">S</text></svg>
<div style="position:absolute;left:213px;top:845px;width:22px;height:24px;background:#191970;border:1px solid #8c8c8c;"></div><svg style="position:absolute;left:213px;top:845px;" width="22" height="24" viewBox="0 0 22 24" shape-rendering="crispEdges"><path d="M3,4 L3,19 M3,4 L18,4" stroke="#ff0" stroke-width="1"/><path d="M8,4 L8,19 M3,9 L18,9" stroke="#ff0" stroke-width="1"/><path d="M13,4 L13,19 M3,14 L18,14" stroke="#ff0" stroke-width="1"/><path d="M18,4 L18,19 M3,19 L18,19" stroke="#ff0" stroke-width="1"/></svg>
<div style="position:absolute;left:236px;top:821px;width:21px;height:48px;background:#191970;border:1px solid #8c8c8c;"></div><svg style="position:absolute;left:236px;top:821px;" width="21" height="48" viewBox="0 0 21 48" shape-rendering="crispEdges"><path d="M3,6 L8,4 L11,9 L7,14 M12,5 L18,3 L15,11 L17,14" fill="none" stroke="#ff0" stroke-width="2"/><text x="11" y="26" font-size="9" font-family="Liberation Sans" fill="#ff0" text-anchor="middle">M</text><text x="11" y="35" font-size="9" font-family="Liberation Sans" fill="#ff0" text-anchor="middle">A</text><text x="11" y="44" font-size="9" font-family="Liberation Sans" fill="#ff0" text-anchor="middle">P</text></svg>
<div style="position:absolute;left:258px;top:821px;width:21px;height:48px;background:#191970;border:1px solid #8c8c8c;"></div><svg style="position:absolute;left:258px;top:821px;" width="21" height="48" viewBox="0 0 21 48" shape-rendering="crispEdges"><circle cx="10.5" cy="24" r="8" fill="none" stroke="#ff0" stroke-width="1.3"/><circle cx="10.5" cy="24" r="4.8" fill="none" stroke="#ff0" stroke-width="1.3"/><circle cx="10.5" cy="24" r="2.2" fill="none" stroke="#ff0" stroke-width="1.3"/><path d="M2.5,24 L18.5,24 M10.5,16 L10.5,32 M4.9,18.4 L16.1,29.6 M4.9,29.6 L16.1,18.4" stroke="#ff0" stroke-width="1.3"/></svg>
<div style="position:absolute;left:280px;top:845px;width:22px;height:24px;background:#191970;border:1px solid #8c8c8c;"></div><svg style="position:absolute;left:280px;top:845px;" width="22" height="24" viewBox="0 0 22 24" shape-rendering="crispEdges"><circle cx="11" cy="12" r="7" fill="none" stroke="#ff0" stroke-width="1.3"/></svg>
<div style="position:absolute;left:303px;top:821px;width:46px;height:48px;background:#6e6e6e;border:1px solid #8c8c8c;"></div><svg style="position:absolute;left:303px;top:821px;" width="46" height="48" viewBox="0 0 46 48" shape-rendering="crispEdges"><g transform="scale(1.0)"><path d="M4,32 L41,32 L38,38 L8,38 Z" fill="none" stroke="#ddd" stroke-width="1.5"/><path d="M9,33 L9,24 L14,24 L16,33" fill="none" stroke="#ddd" stroke-width="1.5"/><circle cx="22" cy="24" r="3" fill="none" stroke="#ddd" stroke-width="1.5"/><path d="M22,27 L22,33 M34,15 L34,33" stroke="#ddd" stroke-width="1.5"/><path d="M3,40 L6,38 L9,40 L12,38 L15,40 L18,38 L21,40 L24,38 L27,40 L30,38 L33,40 L36,38 L39,40 L42,38 L42,44 L3,44 Z" fill="#ddd"/></g></svg>
<div style="position:absolute;left:571px;top:2px;width:562px;height:384px;background:#000;"></div><div style="position:absolute;left:571px;top:2px;width:562px;height:1px;border-top:1px dotted #fff;"></div><div style="position:absolute;left:571px;top:2px;width:1px;height:384px;border-left:1px dotted #fff;"></div><div style="position:absolute;left:1132px;top:2px;width:1px;height:384px;border-left:1px dotted #fff;"></div><div style="position:absolute;left:571px;top:385px;width:562px;height:1px;border-top:1px dotted #fff;"></div>
<div style="position:absolute;left:571px;top:0px;width:162px;height:2px;background:#006400;"></div>
<div style="position:absolute;left:850px;top:0px;width:123px;height:2px;background:#006400;"></div>
<div style="position:absolute;left:973px;top:0px;width:47px;height:2px;background:#0000cd;"></div>
<div style="position:absolute;left:1102px;top:0px;width:31px;height:2px;background:#0000cd;"></div>
<svg style="position:absolute;left:0px;top:0px;" width="1280" height="1024" viewBox="0 0 1280 1024" shape-rendering="crispEdges"><g stroke="#fff" stroke-width="1" fill="none"><rect x="622.5" y="29.5" width="426" height="281"/><path d="M622,282.5 L633,282.5 M1037,282.5 L1048,282.5"/><path d="M622,254.5 L633,254.5 M1037,254.5 L1048,254.5"/><path d="M622,226.5 L633,226.5 M1037,226.5 L1048,226.5"/><path d="M622,198.5 L633,198.5 M1037,198.5 L1048,198.5"/><path d="M622,170.5 L633,170.5 M1037,170.5 L1048,170.5"/><path d="M622,141.5 L633,141.5 M1037,141.5 L1048,141.5"/><path d="M622,113.5 L633,113.5 M1037,113.5 L1048,113.5"/><path d="M622,85.5 L633,85.5 M1037,85.5 L1048,85.5"/><path d="M622,57.5 L633,57.5 M1037,57.5 L1048,57.5"/><path d="M675.5,29 L675.5,36 M675.5,310 L675.5,303"/><path d="M728.5,29 L728.5,36 M728.5,310 L728.5,303"/><path d="M782.5,29 L782.5,36 M782.5,310 L782.5,303"/><path d="M835.5,29 L835.5,36 M835.5,310 L835.5,303"/><path d="M888.5,29 L888.5,36 M888.5,310 L888.5,303"/><path d="M942.5,29 L942.5,36 M942.5,310 L942.5,303"/><path d="M995.5,29 L995.5,36 M995.5,310 L995.5,303"/></g></svg>
<div class="t" style="left:582px;top:3.8px;font-size:19px;line-height:21.8px;color:#fff;font-family:'Liberation Sans',sans-serif;"><span style="color:#ff0">22-aug-1997,16:05:00</span>  Planar cross-section plot.  Contour of</div><div class="t" style="left:582px;top:30.7px;font-size:18px;line-height:20.7px;color:#fff;font-family:'Liberation Sans',sans-serif;">maxdz using: rhb_3d.</div>
<div class="t" style="right:661px;top:301.0px;font-size:11px;line-height:12.6px;color:#fff;font-family:'Liberation Sans',sans-serif;">0</div>
<div class="t" style="right:661px;top:244.8px;font-size:11px;line-height:12.6px;color:#fff;font-family:'Liberation Sans',sans-serif;">4</div>
<div class="t" style="right:661px;top:188.6px;font-size:11px;line-height:12.6px;color:#fff;font-family:'Liberation Sans',sans-serif;">8</div>
<div class="t" style="right:661px;top:132.4px;font-size:11px;line-height:12.6px;color:#fff;font-family:'Liberation Sans',sans-serif;">12</div>
<div class="t" style="right:661px;top:76.2px;font-size:11px;line-height:12.6px;color:#fff;font-family:'Liberation Sans',sans-serif;">16</div>
<div class="t" style="right:661px;top:20.0px;font-size:11px;line-height:12.6px;color:#fff;font-family:'Liberation Sans',sans-serif;">20</div>
<div class="t" style="left:622.0px;transform:translateX(-50%);top:311.5px;font-size:11px;line-height:12.6px;color:#fff;font-family:'Liberation Sans',sans-serif;">0.0</div>
<div class="t" style="left:728.5px;transform:translateX(-50%);top:311.5px;font-size:11px;line-height:12.6px;color:#fff;font-family:'Liberation Sans',sans-serif;">5.9</div>
<div class="t" style="left:835.0px;transform:translateX(-50%);top:311.5px;font-size:11px;line-height:12.6px;color:#fff;font-family:'Liberation Sans',sans-serif;">11.7</div>
<div class="t" style="left:941.5px;transform:translateX(-50%);top:311.5px;font-size:11px;line-height:12.6px;color:#fff;font-family:'Liberation Sans',sans-serif;">17.6</div>
<div class="t" style="left:1048.0px;transform:translateX(-50%);top:311.5px;font-size:11px;line-height:12.6px;color:#fff;font-family:'Liberation Sans',sans-serif;">23</div>
<div class="t" style="left:835.5px;transform:translateX(-50%);top:321.8px;font-size:10.2px;line-height:11.7px;color:#fff;font-family:'Liberation Sans',sans-serif;">Distance in km</div>
<div class="t" style="left:599px;top:170px;font-size:12px;line-height:12px;color:#fff;font-family:'Liberation Sans',sans-serif;letter-spacing:1px;transform:translate(-50%,-50%) rotate(-90deg);">km above MSL</div>
<div style="position:absolute;left:1049px;top:28px;width:84px;height:1px;background:#888;"></div>
<div class="t" style="left:1051px;top:33.2px;font-size:13px;line-height:14.9px;color:#fff;font-family:'Liberation Sans',sans-serif;">maxdz</div>
<div style="position:absolute;left:1050px;top:52px;width:10px;height:17px;background:#ff8080;"></div>
<div style="position:absolute;left:1050px;top:69px;width:10px;height:17px;background:#ff8c91;"></div>
<div style="position:absolute;left:1050px;top:86px;width:10px;height:17px;background:#faaa64;"></div>
<div style="position:absolute;left:1050px;top:103px;width:10px;height:17px;background:#fad7af;"></div>
<div style="position:absolute;left:1050px;top:120px;width:10px;height:17px;background:#fad714;"></div>
<div style="position:absolute;left:1050px;top:137px;width:10px;height:17px;background:#ebb428;"></div>
<div style="position:absolute;left:1050px;top:154px;width:10px;height:17px;background:#d79137;"></div>
<div style="position:absolute;left:1050px;top:171px;width:10px;height:17px;background:#c8c8c8;"></div>
<div style="position:absolute;left:1050px;top:188px;width:10px;height:17px;background:#00734b;"></div>
<div style="position:absolute;left:1050px;top:205px;width:10px;height:17px;background:#00e696;"></div>
<div style="position:absolute;left:1050px;top:222px;width:10px;height:17px;background:#00b4e6;"></div>
<div style="position:absolute;left:1050px;top:239px;width:10px;height:17px;background:#0073e6;"></div>
<div style="position:absolute;left:1050px;top:256px;width:10px;height:17px;background:#1e3ce1;"></div>
<div style="position:absolute;left:1050px;top:273px;width:10px;height:17px;background:#501ee6;"></div>
<div style="position:absolute;left:1050px;top:290px;width:10px;height:17px;background:#7800eb;"></div>
<div style="position:absolute;left:1050px;top:307px;width:10px;height:17px;background:#9600f0;"></div>
<div class="t" style="left:1065px;top:53.2px;font-size:13px;line-height:14.9px;color:#fff;font-family:'Liberation Sans',sans-serif;">62.5</div>
<div class="t" style="left:1065px;top:70.2px;font-size:13px;line-height:14.9px;color:#fff;font-family:'Liberation Sans',sans-serif;">57.5</div>
<div class="t" style="left:1065px;top:87.2px;font-size:13px;line-height:14.9px;color:#fff;font-family:'Liberation Sans',sans-serif;">52.5</div>
<div class="t" style="left:1065px;top:104.2px;font-size:13px;line-height:14.9px;color:#fff;font-family:'Liberation Sans',sans-serif;">47.5</div>
<div class="t" style="left:1065px;top:121.2px;font-size:13px;line-height:14.9px;color:#fff;font-family:'Liberation Sans',sans-serif;">42.5</div>
<div class="t" style="left:1065px;top:138.2px;font-size:13px;line-height:14.9px;color:#fff;font-family:'Liberation Sans',sans-serif;">37.5</div>
<div class="t" style="left:1065px;top:155.2px;font-size:13px;line-height:14.9px;color:#fff;font-family:'Liberation Sans',sans-serif;">32.5</div>
<div class="t" style="left:1065px;top:172.2px;font-size:13px;line-height:14.9px;color:#fff;font-family:'Liberation Sans',sans-serif;">27.5</div>
<div class="t" style="left:1065px;top:189.2px;font-size:13px;line-height:14.9px;color:#fff;font-family:'Liberation Sans',sans-serif;">22.5</div>
<div class="t" style="left:1065px;top:206.2px;font-size:13px;line-height:14.9px;color:#fff;font-family:'Liberation Sans',sans-serif;">17.5</div>
<div class="t" style="left:1065px;top:223.2px;font-size:13px;line-height:14.9px;color:#fff;font-family:'Liberation Sans',sans-serif;">12.5</div>
<div class="t" style="left:1065px;top:240.2px;font-size:13px;line-height:14.9px;color:#fff;font-family:'Liberation Sans',sans-serif;">7.5</div>
<div class="t" style="left:1065px;top:257.2px;font-size:13px;line-height:14.9px;color:#fff;font-family:'Liberation Sans',sans-serif;">2.5</div>
<div class="t" style="left:1065px;top:274.2px;font-size:13px;line-height:14.9px;color:#fff;font-family:'Liberation Sans',sans-serif;">&#8211;2.5</div>
<div class="t" style="left:1065px;top:291.2px;font-size:13px;line-height:14.9px;color:#fff;font-family:'Liberation Sans',sans-serif;">&#8211;7.5</div>
<div class="t" style="left:1065px;top:308.2px;font-size:13px;line-height:14.9px;color:#fff;font-family:'Liberation Sans',sans-serif;">&#8211;12.5</div>
<div style="position:absolute;left:1048px;top:335px;width:85px;height:1px;background:#888;"></div>
<svg style="position:absolute;left:0px;top:0px;shape-rendering:auto" width="1280" height="1024" viewBox="0 0 1280 1024" shape-rendering="crispEdges"><path d="M674,236 L713,236 L725,226 L725,207 L794,207 L794,299 L674,299 Z" fill="#00b4e6"/><rect x="725" y="207" width="69" height="2" fill="#0050e0"/><path d="M674,236 L713,236 L725,222 Q752,211 794,221 L794,299 L674,299 Z" fill="#00e696"/><path d="M674,243 Q700,241 722,236 Q750,220 794,231 L794,299 L674,299 Z" fill="#00734b"/><path d="M674,260 Q705,255 725,246 Q750,232 794,249 L794,299 L674,299 Z" fill="#c8c8c8"/><path d="M680,299 L680,286 Q690,262 750,253 Q780,254 794,264 L794,299 Z" fill="#d79137"/><path d="M688,299 Q694,276 740,272 Q778,272 794,290 L794,299 Z" fill="#ebb428"/><path d="M705,299 Q708,280 714,275 Q728,282 740,299 Z" fill="#fad714"/><rect x="880" y="293" width="23" height="6" fill="#00b4e6"/><rect x="903" y="293" width="16" height="6" fill="#00e696"/><rect x="945" y="225" width="17" height="74" fill="#00734b"/><path d="M945,225 L962,225 L962,237 L945,247 Z" fill="#00e696"/><rect x="962" y="276" width="43" height="23" fill="#00734b"/><path d="M958,299 L963,277 L969,299 Z" fill="#c8c8c8"/><rect x="1003" y="276" width="2" height="13" fill="#00e696"/></svg>
<div style="position:absolute;left:577px;top:336px;width:46px;height:48px;background:#191970;border:1px solid #8c8c8c;"></div><svg style="position:absolute;left:577px;top:336px;shape-rendering:auto" width="46" height="48" viewBox="0 0 46 48" shape-rendering="crispEdges"><path d="M7,14 C11,9 16,7 22,9 C28,11 33,12 38,9 C30,16 19,26 7,39 C12,35 18,35 25,38 C31,40 36,39 39,35" fill="none" stroke="#ffff00" stroke-width="1.9" transform="scale(1.000,1.000)"/><path d="M38,9 C30,17 20,27 7,39" fill="none" stroke="#ffff00" stroke-width="1" transform="translate(1.2,0.5) scale(1.000,1.000)"/></svg>
<div style="position:absolute;left:624px;top:336px;width:47px;height:48px;background:#191970;border:1px solid #8c8c8c;"></div><svg style="position:absolute;left:624px;top:336px;" width="47" height="48" viewBox="0 0 47 48" shape-rendering="crispEdges"><defs><pattern id="chkff0" width="2" height="2" patternUnits="userSpaceOnUse"><rect width="1" height="1" fill="#ff0"/><rect x="1" y="1" width="1" height="1" fill="#ff0"/></pattern></defs><text x="23" y="8.5" font-size="7.5" font-family="Liberation Sans" font-weight="bold" fill="#ff0" text-anchor="middle" letter-spacing="0.3">CROSS</text><rect x="13" y="13" width="21" height="21" fill="url(#chkff0)"/><rect x="4.5" y="17.5" width="20" height="19" fill="none" stroke="#ff0"/><path d="M15.5,11.5 L39.5,11.5 L39.5,30.5 M4.5,17.5 L15.5,11.5 M24.5,17.5 L39.5,11.5 M24.5,36.5 L39.5,30.5 M34.5,14 L34.5,33 M13.5,33.5 L34.5,33.5" fill="none" stroke="#ff0"/><text x="23" y="44.5" font-size="7.5" font-family="Liberation Sans" font-weight="bold" fill="#ff0" text-anchor="middle" letter-spacing="0.2">SECTION</text></svg>
<div style="position:absolute;left:671px;top:336px;width:47px;height:48px;background:#6e6e6e;border:1px solid #8c8c8c;"></div><svg style="position:absolute;left:671px;top:336px;" width="47" height="48" viewBox="0 0 47 48" shape-rendering="crispEdges"><defs><pattern id="chkddd" width="2" height="2" patternUnits="userSpaceOnUse"><rect width="1" height="1" fill="#ddd"/><rect x="1" y="1" width="1" height="1" fill="#ddd"/></pattern></defs><text x="23" y="8.5" font-size="7.5" font-family="Liberation Sans" font-weight="bold" fill="#ddd" text-anchor="middle" letter-spacing="0.3">CROSS</text><rect x="13" y="13" width="21" height="21" fill="url(#chkddd)"/><rect x="4.5" y="17.5" width="20" height="19" fill="none" stroke="#ddd"/><path d="M15.5,11.5 L39.5,11.5 L39.5,30.5 M4.5,17.5 L15.5,11.5 M24.5,17.5 L39.5,11.5 M24.5,36.5 L39.5,30.5 M34.5,14 L34.5,33 M13.5,33.5 L34.5,33.5" fill="none" stroke="#ddd"/><text x="23" y="44.5" font-size="7.5" font-family="Liberation Sans" font-weight="bold" fill="#ddd" text-anchor="middle" letter-spacing="0.2">SECTION</text></svg>
<div style="position:absolute;left:718px;top:336px;width:47px;height:48px;background:#6e6e6e;border:1px solid #8c8c8c;"></div><svg style="position:absolute;left:718px;top:336px;" width="47" height="48" viewBox="0 0 47 48" shape-rendering="crispEdges"><defs><pattern id="chkddd" width="2" height="2" patternUnits="userSpaceOnUse"><rect width="1" height="1" fill="#ddd"/><rect x="1" y="1" width="1" height="1" fill="#ddd"/></pattern></defs><text x="23" y="8.5" font-size="7.5" font-family="Liberation Sans" font-weight="bold" fill="#ddd" text-anchor="middle" letter-spacing="0.3">CROSS</text><rect x="13" y="13" width="21" height="21" fill="url(#chkddd)"/><rect x="4.5" y="17.5" width="20" height="19" fill="none" stroke="#ddd"/><path d="M15.5,11.5 L39.5,11.5 L39.5,30.5 M4.5,17.5 L15.5,11.5 M24.5,17.5 L39.5,11.5 M24.5,36.5 L39.5,30.5 M34.5,14 L34.5,33 M13.5,33.5 L34.5,33.5" fill="none" stroke="#ddd"/><text x="23" y="44.5" font-size="7.5" font-family="Liberation Sans" font-weight="bold" fill="#ddd" text-anchor="middle" letter-spacing="0.2">SECTION</text></svg>
<div style="position:absolute;left:1135px;top:420px;width:5px;height:286px;background:#fff;"></div>
<div style="position:absolute;left:573px;top:386px;width:562px;height:386px;background:#000;"></div><div style="position:absolute;left:573px;top:386px;width:562px;height:1px;border-top:1px dotted #fff;"></div><div style="position:absolute;left:573px;top:386px;width:1px;height:386px;border-left:1px dotted #fff;"></div><div style="position:absolute;left:1134px;top:386px;width:1px;height:386px;border-left:1px dotted #fff;"></div><div style="position:absolute;left:573px;top:771px;width:562px;height:1px;border-top:1px dotted #fff;"></div>
<svg style="position:absolute;left:0px;top:0px;" width="1280" height="1024" viewBox="0 0 1280 1024" shape-rendering="crispEdges"><g stroke="#fff" stroke-width="1" fill="none"><rect x="624.5" y="413.5" width="426" height="282"/><path d="M624,667.5 L635,667.5 M1039,667.5 L1050,667.5"/><path d="M624,639.5 L635,639.5 M1039,639.5 L1050,639.5"/><path d="M624,610.5 L635,610.5 M1039,610.5 L1050,610.5"/><path d="M624,582.5 L635,582.5 M1039,582.5 L1050,582.5"/><path d="M624,554.5 L635,554.5 M1039,554.5 L1050,554.5"/><path d="M624,526.5 L635,526.5 M1039,526.5 L1050,526.5"/><path d="M624,498.5 L635,498.5 M1039,498.5 L1050,498.5"/><path d="M624,469.5 L635,469.5 M1039,469.5 L1050,469.5"/><path d="M624,441.5 L635,441.5 M1039,441.5 L1050,441.5"/><path d="M677.5,413 L677.5,420 M677.5,695 L677.5,688"/><path d="M730.5,413 L730.5,420 M730.5,695 L730.5,688"/><path d="M784.5,413 L784.5,420 M784.5,695 L784.5,688"/><path d="M837.5,413 L837.5,420 M837.5,695 L837.5,688"/><path d="M890.5,413 L890.5,420 M890.5,695 L890.5,688"/><path d="M944.5,413 L944.5,420 M944.5,695 L944.5,688"/><path d="M997.5,413 L997.5,420 M997.5,695 L997.5,688"/></g></svg>
<div class="t" style="left:584px;top:387.8px;font-size:19px;line-height:21.8px;color:#fff;font-family:'Liberation Sans',sans-serif;"><span style="color:#ff0">22-aug-1997,16:05:00</span>  Planar cross-section plot.  Contour of</div><div class="t" style="left:584px;top:414.3px;font-size:18.5px;line-height:21.3px;color:#fff;font-family:'Liberation Sans',sans-serif;">radialvelocity using: rhb_3d.</div>
<div class="t" style="right:659px;top:686.0px;font-size:11px;line-height:12.6px;color:#fff;font-family:'Liberation Sans',sans-serif;">0</div>
<div class="t" style="right:659px;top:629.6px;font-size:11px;line-height:12.6px;color:#fff;font-family:'Liberation Sans',sans-serif;">4</div>
<div class="t" style="right:659px;top:573.2px;font-size:11px;line-height:12.6px;color:#fff;font-family:'Liberation Sans',sans-serif;">8</div>
<div class="t" style="right:659px;top:516.8px;font-size:11px;line-height:12.6px;color:#fff;font-family:'Liberation Sans',sans-serif;">12</div>
<div class="t" style="right:659px;top:460.4px;font-size:11px;line-height:12.6px;color:#fff;font-family:'Liberation Sans',sans-serif;">16</div>
<div class="t" style="right:659px;top:404.0px;font-size:11px;line-height:12.6px;color:#fff;font-family:'Liberation Sans',sans-serif;">20</div>
<div class="t" style="left:624.0px;transform:translateX(-50%);top:695.5px;font-size:11px;line-height:12.6px;color:#fff;font-family:'Liberation Sans',sans-serif;">0.0</div>
<div class="t" style="left:730.5px;transform:translateX(-50%);top:695.5px;font-size:11px;line-height:12.6px;color:#fff;font-family:'Liberation Sans',sans-serif;">5.9</div>
<div class="t" style="left:837.0px;transform:translateX(-50%);top:695.5px;font-size:11px;line-height:12.6px;color:#fff;font-family:'Liberation Sans',sans-serif;">11.7</div>
<div class="t" style="left:943.5px;transform:translateX(-50%);top:695.5px;font-size:11px;line-height:12.6px;color:#fff;font-family:'Liberation Sans',sans-serif;">17.6</div>
<div class="t" style="left:1050.0px;transform:translateX(-50%);top:695.5px;font-size:11px;line-height:12.6px;color:#fff;font-family:'Liberation Sans',sans-serif;">23</div>
<div class="t" style="left:837.5px;transform:translateX(-50%);top:705.8px;font-size:10.2px;line-height:11.7px;color:#fff;font-family:'Liberation Sans',sans-serif;">Distance in km</div>
<div class="t" style="left:601px;top:554px;font-size:12px;line-height:12px;color:#fff;font-family:'Liberation Sans',sans-serif;letter-spacing:1px;transform:translate(-50%,-50%) rotate(-90deg);">km above MSL</div>
<div style="position:absolute;left:1051px;top:412px;width:84px;height:1px;background:#888;"></div>
<div class="t" style="left:1052px;top:416.2px;font-size:13px;line-height:14.9px;color:#fff;font-family:'Liberation Sans',sans-serif;">radialvelocity</div>
<div style="position:absolute;left:1052px;top:436.0px;width:10px;height:11px;background:#ff0000;"></div>
<div style="position:absolute;left:1052px;top:446.96px;width:10px;height:11px;background:#dc0000;"></div>
<div style="position:absolute;left:1052px;top:457.92px;width:10px;height:11px;background:#8c0000;"></div>
<div style="position:absolute;left:1052px;top:468.88px;width:10px;height:11px;background:#dc5000;"></div>
<div style="position:absolute;left:1052px;top:479.84000000000003px;width:10px;height:11px;background:#ff7800;"></div>
<div style="position:absolute;left:1052px;top:490.8px;width:10px;height:11px;background:#ff5a5a;"></div>
<div style="position:absolute;left:1052px;top:501.76px;width:10px;height:11px;background:#ff9696;"></div>
<div style="position:absolute;left:1052px;top:512.72px;width:10px;height:11px;background:#ffbebe;"></div>
<div style="position:absolute;left:1052px;top:523.6800000000001px;width:10px;height:11px;background:#ffff00;"></div>
<div style="position:absolute;left:1052px;top:534.64px;width:10px;height:11px;background:#ffb41e;"></div>
<div style="position:absolute;left:1052px;top:545.6px;width:10px;height:11px;background:#d28c5a;"></div>
<div style="position:absolute;left:1052px;top:556.56px;width:10px;height:11px;background:#a04600;"></div>
<div style="position:absolute;left:1052px;top:567.52px;width:10px;height:11px;background:#b4b4b4;"></div>
<div style="position:absolute;left:1052px;top:578.48px;width:10px;height:11px;background:#005014;"></div>
<div style="position:absolute;left:1052px;top:589.44px;width:10px;height:11px;background:#008214;"></div>
<div style="position:absolute;left:1052px;top:600.4px;width:10px;height:11px;background:#00aa14;"></div>
<div style="position:absolute;left:1052px;top:611.36px;width:10px;height:11px;background:#00f000;"></div>
<div style="position:absolute;left:1052px;top:622.32px;width:10px;height:11px;background:#00beff;"></div>
<div style="position:absolute;left:1052px;top:633.28px;width:10px;height:11px;background:#0078ff;"></div>
<div style="position:absolute;left:1052px;top:644.24px;width:10px;height:11px;background:#0000dc;"></div>
<div style="position:absolute;left:1052px;top:655.2px;width:10px;height:11px;background:#0014b4;"></div>
<div style="position:absolute;left:1052px;top:666.1600000000001px;width:10px;height:11px;background:#00008c;"></div>
<div style="position:absolute;left:1052px;top:677.12px;width:10px;height:11px;background:#8c8cb4;"></div>
<div style="position:absolute;left:1052px;top:688.08px;width:10px;height:11px;background:#5a5a82;"></div>
<div style="position:absolute;left:1052px;top:699.04px;width:10px;height:11px;background:#6e6e6e;"></div>
<div class="t" style="left:1067px;top:434.2px;font-size:13px;line-height:14.9px;color:#fff;font-family:'Liberation Sans',sans-serif;letter-spacing:-0.3px;">24.0</div>
<div class="t" style="left:1067px;top:445.2px;font-size:13px;line-height:14.9px;color:#fff;font-family:'Liberation Sans',sans-serif;letter-spacing:-0.3px;">22.0</div>
<div class="t" style="left:1067px;top:456.2px;font-size:13px;line-height:14.9px;color:#fff;font-family:'Liberation Sans',sans-serif;letter-spacing:-0.3px;">20.0</div>
<div class="t" style="left:1067px;top:467.1px;font-size:13px;line-height:14.9px;color:#fff;font-family:'Liberation Sans',sans-serif;letter-spacing:-0.3px;">18.0</div>
<div class="t" style="left:1067px;top:478.1px;font-size:13px;line-height:14.9px;color:#fff;font-family:'Liberation Sans',sans-serif;letter-spacing:-0.3px;">16.0</div>
<div class="t" style="left:1067px;top:489.0px;font-size:13px;line-height:14.9px;color:#fff;font-family:'Liberation Sans',sans-serif;letter-spacing:-0.3px;">14.0</div>
<div class="t" style="left:1067px;top:500.0px;font-size:13px;line-height:14.9px;color:#fff;font-family:'Liberation Sans',sans-serif;letter-spacing:-0.3px;">12.0</div>
<div class="t" style="left:1067px;top:511.0px;font-size:13px;line-height:14.9px;color:#fff;font-family:'Liberation Sans',sans-serif;letter-spacing:-0.3px;">10.0</div>
<div class="t" style="left:1067px;top:521.9px;font-size:13px;line-height:14.9px;color:#fff;font-family:'Liberation Sans',sans-serif;letter-spacing:-0.3px;">8.0</div>
<div class="t" style="left:1067px;top:532.9px;font-size:13px;line-height:14.9px;color:#fff;font-family:'Liberation Sans',sans-serif;letter-spacing:-0.3px;">6.0</div>
<div class="t" style="left:1067px;top:543.8px;font-size:13px;line-height:14.9px;color:#fff;font-family:'Liberation Sans',sans-serif;letter-spacing:-0.3px;">4.0</div>
<div class="t" style="left:1067px;top:554.8px;font-size:13px;line-height:14.9px;color:#fff;font-family:'Liberation Sans',sans-serif;letter-spacing:-0.3px;">2.0</div>
<div class="t" style="left:1067px;top:565.8px;font-size:13px;line-height:14.9px;color:#fff;font-family:'Liberation Sans',sans-serif;letter-spacing:-0.3px;">0.0</div>
<div class="t" style="left:1067px;top:576.7px;font-size:13px;line-height:14.9px;color:#fff;font-family:'Liberation Sans',sans-serif;letter-spacing:-0.3px;">&#8211;2.0</div>
<div class="t" style="left:1067px;top:587.7px;font-size:13px;line-height:14.9px;color:#fff;font-family:'Liberation Sans',sans-serif;letter-spacing:-0.3px;">&#8211;4.0</div>
<div class="t" style="left:1067px;top:598.6px;font-size:13px;line-height:14.9px;color:#fff;font-family:'Liberation Sans',sans-serif;letter-spacing:-0.3px;">&#8211;6.0</div>
<div class="t" style="left:1067px;top:609.6px;font-size:13px;line-height:14.9px;color:#fff;font-family:'Liberation Sans',sans-serif;letter-spacing:-0.3px;">&#8211;8.0</div>
<div class="t" style="left:1067px;top:620.6px;font-size:13px;line-height:14.9px;color:#fff;font-family:'Liberation Sans',sans-serif;letter-spacing:-0.3px;">&#8211;10.0</div>
<div class="t" style="left:1067px;top:631.5px;font-size:13px;line-height:14.9px;color:#fff;font-family:'Liberation Sans',sans-serif;letter-spacing:-0.3px;">&#8211;12.0</div>
<div class="t" style="left:1067px;top:642.5px;font-size:13px;line-height:14.9px;color:#fff;font-family:'Liberation Sans',sans-serif;letter-spacing:-0.3px;">&#8211;14.0</div>
<div class="t" style="left:1067px;top:653.4px;font-size:13px;line-height:14.9px;color:#fff;font-family:'Liberation Sans',sans-serif;letter-spacing:-0.3px;">&#8211;16.0</div>
<div class="t" style="left:1067px;top:664.4px;font-size:13px;line-height:14.9px;color:#fff;font-family:'Liberation Sans',sans-serif;letter-spacing:-0.3px;">&#8211;18.0</div>
<div class="t" style="left:1067px;top:675.4px;font-size:13px;line-height:14.9px;color:#fff;font-family:'Liberation Sans',sans-serif;letter-spacing:-0.3px;">&#8211;20.0</div>
<div class="t" style="left:1067px;top:686.3px;font-size:13px;line-height:14.9px;color:#fff;font-family:'Liberation Sans',sans-serif;letter-spacing:-0.3px;">&#8211;22.0</div>
<div class="t" style="left:1067px;top:697.3px;font-size:13px;line-height:14.9px;color:#fff;font-family:'Liberation Sans',sans-serif;letter-spacing:-0.3px;">&#8211;24.0</div>
<div style="position:absolute;left:1050px;top:719px;width:85px;height:1px;background:#888;"></div>
<svg style="position:absolute;left:0px;top:0px;shape-rendering:auto" width="1280" height="1024" viewBox="0 0 1280 1024" shape-rendering="crispEdges"><path d="M676,620 L716,620 L724,606 L727,606 L727,591 L796,591 L796,683 L676,683 Z" fill="#005014"/><path d="M676,620 L716,620 L722,611 Q745,607 760,618 Q768,630 767,636 Q740,638 722,635 Q712,648 696,656 Q684,661 676,663 Z" fill="#008214"/><rect x="882" y="677" width="39" height="6" fill="#008214"/><rect x="947" y="609" width="17" height="74" fill="#008214"/><rect x="964" y="660" width="43" height="23" fill="#005014"/><path d="M947,609 L964,609 L964,613 Z" fill="#005014"/><path d="M964,660 L975,660 Q965,676 947,683 L964,683 Z" fill="#008214"/></svg>
<div style="position:absolute;left:579px;top:720px;width:46px;height:48px;background:#191970;border:1px solid #8c8c8c;"></div><svg style="position:absolute;left:579px;top:720px;shape-rendering:auto" width="46" height="48" viewBox="0 0 46 48" shape-rendering="crispEdges"><path d="M7,14 C11,9 16,7 22,9 C28,11 33,12 38,9 C30,16 19,26 7,39 C12,35 18,35 25,38 C31,40 36,39 39,35" fill="none" stroke="#ffff00" stroke-width="1.9" transform="scale(1.000,1.000)"/><path d="M38,9 C30,17 20,27 7,39" fill="none" stroke="#ffff00" stroke-width="1" transform="translate(1.2,0.5) scale(1.000,1.000)"/></svg>
<div style="position:absolute;left:626px;top:720px;width:47px;height:48px;background:#191970;border:1px solid #8c8c8c;"></div><svg style="position:absolute;left:626px;top:720px;" width="47" height="48" viewBox="0 0 47 48" shape-rendering="crispEdges"><defs><pattern id="chkff0" width="2" height="2" patternUnits="userSpaceOnUse"><rect width="1" height="1" fill="#ff0"/><rect x="1" y="1" width="1" height="1" fill="#ff0"/></pattern></defs><text x="23" y="8.5" font-size="7.5" font-family="Liberation Sans" font-weight="bold" fill="#ff0" text-anchor="middle" letter-spacing="0.3">CROSS</text><rect x="13" y="13" width="21" height="21" fill="url(#chkff0)"/><rect x="4.5" y="17.5" width="20" height="19" fill="none" stroke="#ff0"/><path d="M15.5,11.5 L39.5,11.5 L39.5,30.5 M4.5,17.5 L15.5,11.5 M24.5,17.5 L39.5,11.5 M24.5,36.5 L39.5,30.5 M34.5,14 L34.5,33 M13.5,33.5 L34.5,33.5" fill="none" stroke="#ff0"/><text x="23" y="44.5" font-size="7.5" font-family="Liberation Sans" font-weight="bold" fill="#ff0" text-anchor="middle" letter-spacing="0.2">SECTION</text></svg>
<div style="position:absolute;left:673px;top:720px;width:47px;height:48px;background:#6e6e6e;border:1px solid #8c8c8c;"></div><svg style="position:absolute;left:673px;top:720px;" width="47" height="48" viewBox="0 0 47 48" shape-rendering="crispEdges"><defs><pattern id="chkddd" width="2" height="2" patternUnits="userSpaceOnUse"><rect width="1" height="1" fill="#ddd"/><rect x="1" y="1" width="1" height="1" fill="#ddd"/></pattern></defs><text x="23" y="8.5" font-size="7.5" font-family="Liberation Sans" font-weight="bold" fill="#ddd" text-anchor="middle" letter-spacing="0.3">CROSS</text><rect x="13" y="13" width="21" height="21" fill="url(#chkddd)"/><rect x="4.5" y="17.5" width="20" height="19" fill="none" stroke="#ddd"/><path d="M15.5,11.5 L39.5,11.5 L39.5,30.5 M4.5,17.5 L15.5,11.5 M24.5,17.5 L39.5,11.5 M24.5,36.5 L39.5,30.5 M34.5,14 L34.5,33 M13.5,33.5 L34.5,33.5" fill="none" stroke="#ddd"/><text x="23" y="44.5" font-size="7.5" font-family="Liberation Sans" font-weight="bold" fill="#ddd" text-anchor="middle" letter-spacing="0.2">SECTION</text></svg>
<div style="position:absolute;left:720px;top:720px;width:47px;height:48px;background:#6e6e6e;border:1px solid #8c8c8c;"></div><svg style="position:absolute;left:720px;top:720px;" width="47" height="48" viewBox="0 0 47 48" shape-rendering="crispEdges"><defs><pattern id="chkddd" width="2" height="2" patternUnits="userSpaceOnUse"><rect width="1" height="1" fill="#ddd"/><rect x="1" y="1" width="1" height="1" fill="#ddd"/></pattern></defs><text x="23" y="8.5" font-size="7.5" font-family="Liberation Sans" font-weight="bold" fill="#ddd" text-anchor="middle" letter-spacing="0.3">CROSS</text><rect x="13" y="13" width="21" height="21" fill="url(#chkddd)"/><rect x="4.5" y="17.5" width="20" height="19" fill="none" stroke="#ddd"/><path d="M15.5,11.5 L39.5,11.5 L39.5,30.5 M4.5,17.5 L15.5,11.5 M24.5,17.5 L39.5,11.5 M24.5,36.5 L39.5,30.5 M34.5,14 L34.5,33 M13.5,33.5 L34.5,33.5" fill="none" stroke="#ddd"/><text x="23" y="44.5" font-size="7.5" font-family="Liberation Sans" font-weight="bold" fill="#ddd" text-anchor="middle" letter-spacing="0.2">SECTION</text></svg>
<div style="position:absolute;left:573px;top:771px;width:508px;height:103px;background:#000;border:1px dotted #fff;"></div>
<div style="position:absolute;left:576px;top:775px;width:47px;height:25px;border:2px solid #fff;"></div>
<div class="t" style="left:599px;transform:translateX(-50%);top:781.1px;font-size:11.5px;line-height:13.2px;color:#fff;font-family:'Liberation Sans',sans-serif;letter-spacing:-0.5px;">Dismiss</div>
<div style="position:absolute;left:573px;top:800px;width:502px;height:68px;border-top:2px solid #fff;border-right:2px solid #fff;border-bottom:2px solid #fff;"></div>
<div class="t" style="left:574px;top:803.5px;font-size:15px;line-height:17.2px;color:#fff;font-family:'Liberation Mono',monospace;">PLATFORM   FIELD      ALTITUDE       TIME</div>
<div class="t" style="left:574px;top:818.5px;font-size:15px;line-height:17.2px;color:#fff;font-family:'Liberation Mono',monospace;">rhb_lowprf maxdz      0.50 km MSL    22-Aug-97,16:00:13</div>
<div class="t" style="left:574px;top:833.5px;font-size:15px;line-height:17.2px;color:#fff;font-family:'Liberation Mono',monospace;">rhb_3d     maxdz      0.50 km MSL    22-Aug-97,16:01:13</div>
</body></html>
